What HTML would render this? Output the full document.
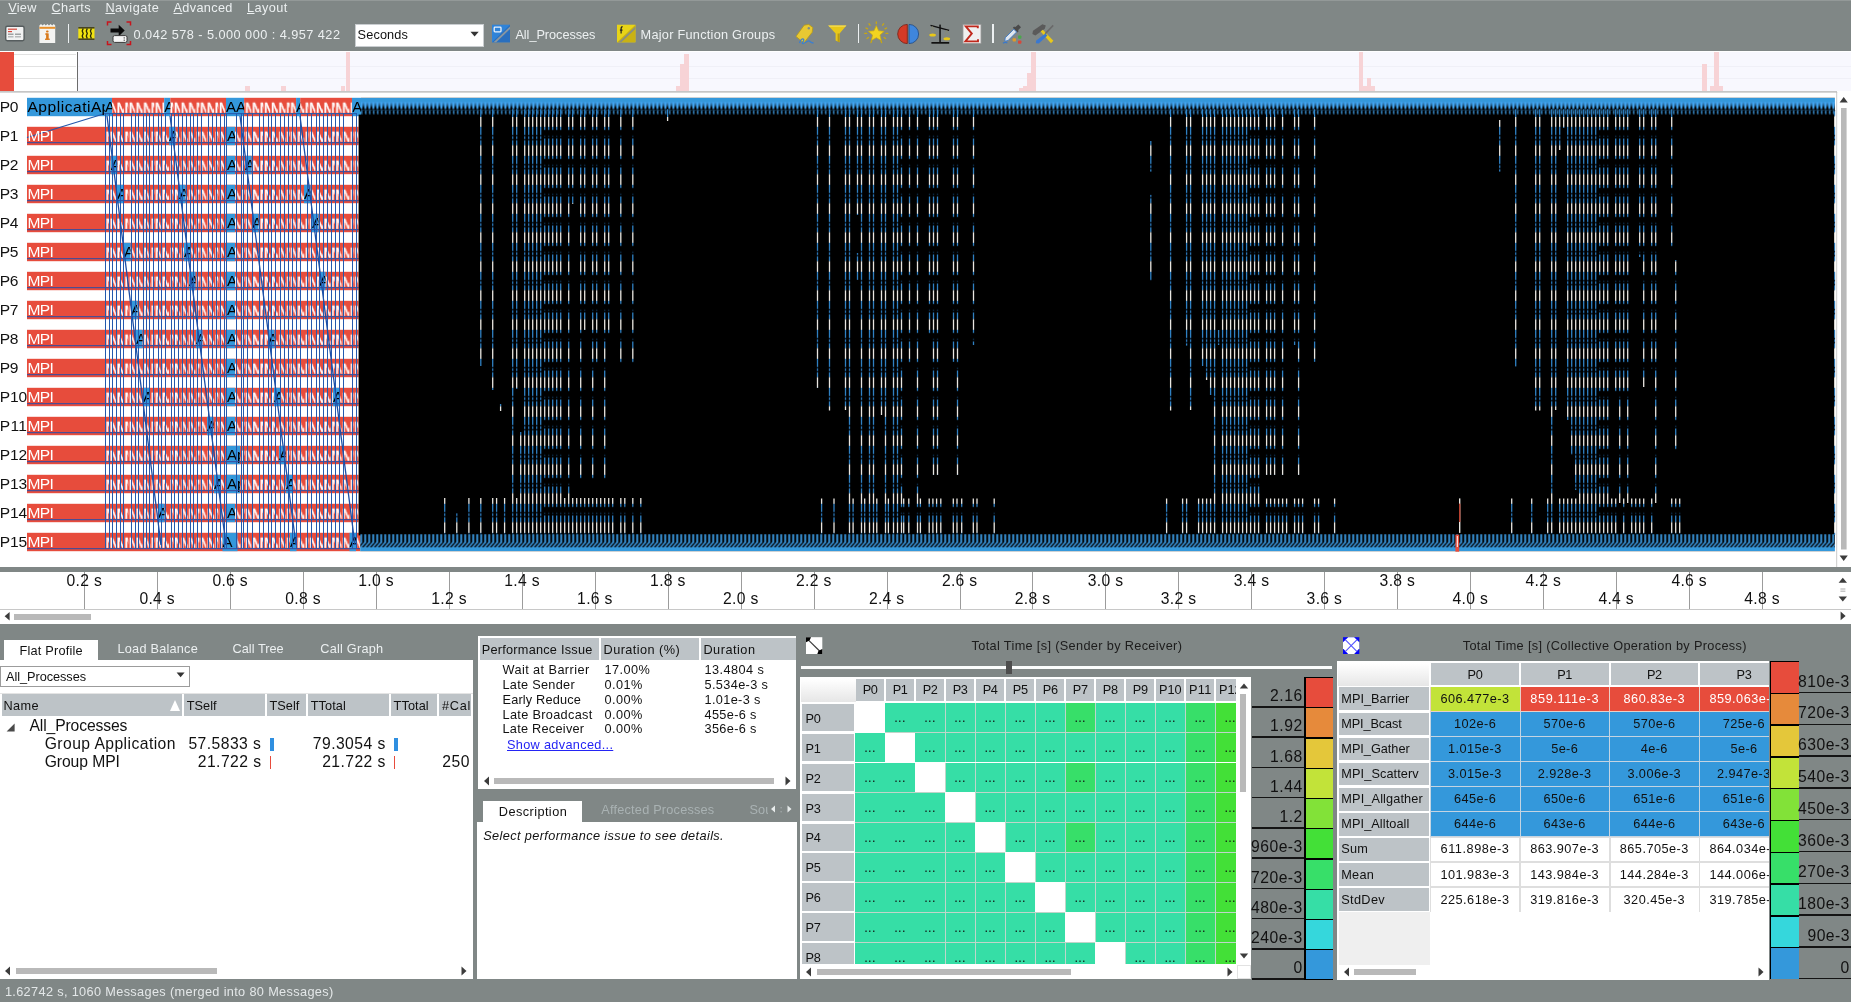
<!DOCTYPE html><html><head><meta charset="utf-8"><title>Trace Analyzer</title><style>
html,body{margin:0;padding:0;background:#fff}
body{width:1852px;height:1002px;position:relative;overflow:hidden;font-family:"Liberation Sans",sans-serif}
body div,body span,body svg{position:absolute;display:block}
span{white-space:pre}
u{text-decoration:underline}
</style></head><body><div style="left:0;top:0;width:1852px;height:1002px;will-change:transform">
<div style="left:0.0px;top:0.0px;width:1851.0px;height:51.3px;background:#808786;"></div>
<div style="left:0.0px;top:0.0px;width:1851.0px;height:1.2px;background:#939998;"></div>
<span style="left:8.2px;top:-0.2px;font-size:12.72px;line-height:15.26px;letter-spacing:0.284px;color:#ecf0f1;"><u>V</u>iew</span>
<span style="left:51.6px;top:-0.2px;font-size:12.72px;line-height:15.26px;letter-spacing:0.294px;color:#ecf0f1;"><u>C</u>harts</span>
<span style="left:105.4px;top:-0.2px;font-size:12.72px;line-height:15.26px;letter-spacing:0.453px;color:#ecf0f1;"><u>N</u>avigate</span>
<span style="left:173.5px;top:-0.2px;font-size:12.72px;line-height:15.26px;letter-spacing:0.338px;color:#ecf0f1;"><u>A</u>dvanced</span>
<span style="left:247.0px;top:-0.2px;font-size:12.72px;line-height:15.26px;letter-spacing:0.434px;color:#ecf0f1;"><u>L</u>ayout</span>

<svg style="left:0;top:18px" width="1100" height="32" viewBox="0 18 1100 32">
<!-- icon1 doc -->
<rect x="5.700" y="26.300" width="18.400" height="14.400" rx="1.600" fill="#f1f2f2" stroke="#565d5e" stroke-width="1.400"/>
<rect x="8" y="28.6" width="9" height="1.2" fill="#d8473a"/><rect x="8" y="31" width="4" height="1.2" fill="#d8473a"/>
<rect x="8" y="33.6" width="5.5" height="1.2" fill="#8a8f90"/><rect x="15" y="33.6" width="6" height="1.2" fill="#8a8f90"/>
<rect x="8" y="36.2" width="5.5" height="1.2" fill="#a8acad"/><rect x="15" y="36.2" width="6" height="1.2" fill="#a8acad"/>
<!-- icon2 calendar i -->
<path d="M39.4 25.4l1.6-1.4 1.6 1.4 1.6-1.4 1.6 1.4 1.6-1.4 1.6 1.4 1.6-1.4 1.6 1.4 1.6-1.4 1.4 1.4V43H39.4z" fill="#f4f4f2"/>
<rect x="39.4" y="26.8" width="15.8" height="2" fill="#e8902a"/>
<rect x="46.1" y="33.4" width="2.6" height="6" fill="#d9791a"/><rect x="45.2" y="33.4" width="2.4" height="1.3" fill="#d9791a"/><rect x="45" y="38.6" width="4.8" height="1.3" fill="#d9791a"/><rect x="46" y="30.4" width="2.6" height="2.1" rx="1" fill="#d9791a"/>
<!-- icon3 film -->
<rect x="78.3" y="27.2" width="16.2" height="12.6" fill="#f2e310"/>
<rect x="78.3" y="27.2" width="16.2" height="1.3" fill="#222"/><rect x="78.3" y="38.5" width="16.2" height="1.3" fill="#222"/>
<path d="M83.200 28.500l-1 2.500 1 2.500-1 2.500 1 2.500M87.300 28.500l-1 2.500 1 2.500-1 2.500 1 2.500M91.400 28.500l-1 2.500 1 2.500-1 2.500 1 2.500" stroke="#2a2a08" stroke-width="1.300" fill="none"/>
<!-- icon4 zoom arrow -->
<path d="M107.5 25.5v-3.4h4M126.5 22.1h4v3.4M107.5 41v3.6h4M126.5 44.6h4V41" fill="none" stroke="#c8141c" stroke-width="1.5"/>
<path d="M110.5 28.6h8.2v-3.9l6 5.8-6 5.8v-3.9h-8.2z" fill="#0a0a0a"/>
<rect x="113" y="35.6" width="14" height="6.8" rx="1.6" fill="#f6f6f6" stroke="#3a3a3a" stroke-width="1"/>
<rect x="123.6" y="37.3" width="1.3" height="1.2" fill="#555"/><rect x="123.6" y="39.6" width="1.3" height="1.2" fill="#555"/>
<!-- icon5 blue square -->
<rect x="492" y="24.7" width="18" height="17.6" fill="#2f83d8"/>
<path d="M510 24.7v17.6h-18z" fill="#2a6fbe"/>
<path d="M493.5 42.3l16.5-15.8v2.6l-13.8 13.2z" fill="#8a97a0"/>
<rect x="494.2" y="27.2" width="6.8" height="4.6" rx="0.8" fill="none" stroke="#eaf2fb" stroke-width="1.3"/>
<!-- icon6 yellow square -->
<rect x="617" y="24.7" width="18.4" height="17.6" fill="#e8d418"/>
<path d="M635.4 24.7v17.6h-18.4z" fill="#c9b214"/>
<path d="M618.5 42.3l16.9-15.8v2.6l-14.1 13.2z" fill="#8a8f80"/>
<path d="M622.6 26.6c-1.3 0-1.5 1-1.5 2.2v4.6M619.9 30.2h2.6" fill="none" stroke="#222" stroke-width="1.2"/>
<!-- tag -->
<path d="M796 36.4l8.2-11.2 4.6-.8 4 3.2-.6 4.6-8.4 10.8z" fill="#e8c832" stroke="#b89a14" stroke-width=".8"/>
<circle cx="808.8" cy="28.2" r="1.2" fill="#7f8c8d"/>
<path d="M799.5 43c1-3 3-5.4 4.2-3.6 1 1.6-2.6 3.6-1 4.2 1.6.5 5-3.6 6.6-2.6 1.3.8 1.2 2 4.2 2" fill="none" stroke="#3b7fd0" stroke-width="1.3"/>
<!-- funnel -->
<path d="M828.2 25.4h18.2l-6.8 8v8.8l-4 -1.6v-7.2z" fill="#e8c81a"/>
<path d="M839.6 33.4v8.8l-2-.8v-8z" fill="#b89a14"/><path d="M828.2 25.4h18.2l-1.2 1.4h-15.8z" fill="#f4de58"/>
<!-- star -->
<path d="M876.3 25.6l2.3 5.2 5.6.5-4.2 3.8 1.3 5.5-5-2.9-5 2.9 1.3-5.500-4.2-3.8 5.6-.5z" fill="#f2d420" stroke="#c9a810" stroke-width=".7"/>
<path d="M876.3 21.800v1.800M866 28l1.600.8M886.600 28l-1.600.8M867 38.500l1.500-1M885.600 38.500l-1.500-1M871 42.600l.6-1.500M881.600 42.600l-.6-1.500M869 23.800l1 1.400M883.600 23.800l-1 1.400M864.800 33.400h1.800M886 33.400h1.800" stroke="#c9a810" stroke-width="1.300" stroke-linecap="round"/>
<!-- red/blue ball -->
<path d="M907.300 24.400a9.600 9.600 0 0 0 0 19.200z" fill="#d43a26" stroke="#7a1d12" stroke-width=".8"/>
<path d="M909 24.400a9.600 9.600 0 0 1 0 19.200z" fill="#3f86dc" stroke="#1d4a86" stroke-width=".8"/>
<!-- scales -->
<path d="M930.500 25.400l18.600 5" stroke="#111" stroke-width="1.500"/><rect x="939.300" y="24.600" width="1.500" height="18" fill="#111"/><rect x="931.400" y="42" width="17.800" height="1.700" fill="#111"/>
<path d="M932.600 26.400l-3 8h6zM946.800 30.200l-3 8h6z" fill="none" stroke="#8c8c6c" stroke-width=".6"/>
<ellipse cx="932.600" cy="35" rx="3.300" ry="1.500" fill="#e8c81a"/><ellipse cx="946.800" cy="38.800" rx="3.300" ry="1.500" fill="#e8c81a"/>
<!-- sigma -->
<rect x="963" y="24.400" width="18" height="19" fill="#f0f0f0" stroke="#9a9a9a" stroke-width=".8"/>
<path d="M977.800 28.200v-1.800h-12l6 7.200-6.400 7.800h12.600v-2.200" fill="none" stroke="#c0281c" stroke-width="1.900"/>
<!-- dropper -->
<path d="M1018.400 24.600l2.600 2.600-3 3 .8.800-1.400 1.400-4.600-4.600 1.400-1.400.8.800z" fill="#4a4a4a"/>
<path d="M1013.800 29.200l2.800 2.800-8.600 8.600-3.200.6.400-3.400z" fill="#dfe6ee" stroke="#3a78c8" stroke-width=".9"/>
<path d="M1003 43.200c1.600-1.200 3-1 4.400-.2" stroke="#3a78c8" stroke-width="1.300" fill="none"/>
<rect x="1018" y="35.400" width="3.400" height="3.400" rx=".8" fill="#4aa84a"/><rect x="1012.600" y="38.200" width="3.400" height="3.400" rx=".8" fill="#e09a2a"/><rect x="1018" y="40.400" width="3.400" height="3.400" rx=".8" fill="#d8473a"/>
<!-- tools -->
<path d="M1033 30.800l9.400-6.600 3.400 1.200-1 3.400-9.400 6.600-3-1.400z" fill="#5a5a5a"/>
<path d="M1040.600 31.400l2.200-1.600 10.600 11-2.400 2.400z" fill="#e8c81a"/>
<path d="M1053.200 25.400l-8 8.400" stroke="#6a6a6a" stroke-width="1.600"/>
<path d="M1045.400 33.600l2 2-8.600 8-3-.4.400-2.600z" fill="#3a78d0"/>
</svg>
<div style="left:67.6px;top:24.3px;width:1.5px;height:19.0px;background:#ecf0f1;"></div>
<div style="left:857.5px;top:24.3px;width:1.5px;height:19.0px;background:#ecf0f1;"></div>
<div style="left:992.3px;top:24.3px;width:1.5px;height:19.0px;background:#ecf0f1;"></div>
<span style="left:133.6px;top:27.0px;font-size:12.72px;line-height:15.26px;letter-spacing:0.460px;color:#ecf0f1;">0.042 578 - 5.000 000 : 4.957 422</span>
<div style="left:355.0px;top:23.6px;width:128.5px;height:23.0px;background:#fff;box-sizing:border-box;border:1px solid #c9cdd0;"></div>
<span style="left:357.6px;top:27.2px;font-size:12.72px;line-height:15.26px;letter-spacing:0.131px;color:#111;">Seconds</span>
<svg style="left:470px;top:31px" width="10" height="7"><path d="M0.5 0.7h8.2L4.6 5.6z" fill="#333"/></svg>
<span style="left:515.4px;top:26.8px;font-size:12.72px;line-height:15.26px;letter-spacing:-0.043px;color:#ecf0f1;">All_Processes</span>
<span style="left:640.6px;top:26.8px;font-size:12.72px;line-height:15.26px;letter-spacing:0.257px;color:#ecf0f1;">Major Function Groups</span>
<div style="left:0.0px;top:51.3px;width:1851.0px;height:41.0px;background:#fff;"></div>
<div style="left:78.0px;top:52.4px;width:1772.5px;height:39.0px;background:#f8f8fe;"></div>
<div style="left:78.0px;top:65.6px;width:1772.5px;height:1.0px;background:#f0f0f7;"></div>
<div style="left:78.0px;top:78.2px;width:1772.5px;height:1.0px;background:#f0f0f7;"></div>
<div style="left:0.0px;top:51.8px;width:14.2px;height:39.6px;background:#e74c3c;"></div>
<div style="left:14.2px;top:54.0px;width:61.6px;height:1.3px;background:#e2e2e2;"></div>
<div style="left:14.2px;top:66.0px;width:61.6px;height:1.3px;background:#e2e2e2;"></div>
<div style="left:14.2px;top:78.0px;width:61.6px;height:1.3px;background:#e2e2e2;"></div>
<div style="left:76.5px;top:52.0px;width:1.4px;height:39.6px;background:#6c6c6c;"></div>
<div style="left:245.4px;top:85.8px;width:4.8px;height:5.6px;background:#f7d3d6;"></div>
<div style="left:281.3px;top:85.8px;width:4.9px;height:5.6px;background:#f7d3d6;"></div>
<div style="left:341.2px;top:85.8px;width:4.3px;height:5.6px;background:#f7d3d6;"></div>
<div style="left:345.5px;top:52.4px;width:4.6px;height:39.0px;background:#f7d3d6;"></div>
<div style="left:676.0px;top:86.0px;width:4.3px;height:5.4px;background:#f7d3d6;"></div>
<div style="left:680.3px;top:63.7px;width:4.1px;height:27.7px;background:#f7d3d6;"></div>
<div style="left:684.4px;top:54.0px;width:4.6px;height:37.4px;background:#f7d3d6;"></div>
<div style="left:1019.0px;top:88.0px;width:4.3px;height:3.4px;background:#f7d3d6;"></div>
<div style="left:1023.3px;top:85.8px;width:4.1px;height:5.6px;background:#f7d3d6;"></div>
<div style="left:1027.4px;top:72.8px;width:3.9px;height:18.6px;background:#f7d3d6;"></div>
<div style="left:1031.3px;top:52.4px;width:4.7px;height:39.0px;background:#f7d3d6;"></div>
<div style="left:1358.5px;top:52.4px;width:4.5px;height:39.0px;background:#f7d3d6;"></div>
<div style="left:1363.0px;top:86.0px;width:3.5px;height:5.4px;background:#f7d3d6;"></div>
<div style="left:1366.5px;top:77.8px;width:4.5px;height:13.6px;background:#f7d3d6;"></div>
<div style="left:1371.0px;top:86.0px;width:4.0px;height:5.4px;background:#f7d3d6;"></div>
<div style="left:1702.1px;top:63.8px;width:4.9px;height:27.6px;background:#f7d3d6;"></div>
<div style="left:1710.2px;top:85.6px;width:12.7px;height:5.8px;background:#f7d3d6;"></div>
<div style="left:1714.1px;top:52.4px;width:4.8px;height:39.0px;background:#f7d3d6;"></div>
<div style="left:0.0px;top:91.3px;width:1837.0px;height:1.4px;background:#c6c6c6;"></div>
<svg style="left:0;top:92px" width="1852" height="476" viewBox="0 92 1852 476"><defs><pattern id="pm" patternUnits="userSpaceOnUse" x="105.300" y="97.8" width="45.100" height="29.0"><svg x="0" y="0" width="3.9" height="29.0" overflow="hidden"><text x="0.200" y="14.700" font-family="Liberation Sans" font-size="15.200" fill="#fff" stroke="#fff" stroke-width=".350">M</text></svg><svg x="4.2" y="0" width="6.5" height="29.0" overflow="hidden"><text x="0.200" y="14.700" font-family="Liberation Sans" font-size="15.200" fill="#fff" stroke="#fff" stroke-width=".350">M</text></svg><svg x="11.0" y="0" width="7.6" height="29.0" overflow="hidden"><text x="0.200" y="14.700" font-family="Liberation Sans" font-size="15.200" fill="#fff" stroke="#fff" stroke-width=".350">M</text></svg><svg x="18.9" y="0" width="3.9" height="29.0" overflow="hidden"><text x="0.200" y="14.700" font-family="Liberation Sans" font-size="15.200" fill="#fff" stroke="#fff" stroke-width=".350">M</text></svg><svg x="23.1" y="0" width="6.5" height="29.0" overflow="hidden"><text x="0.200" y="14.700" font-family="Liberation Sans" font-size="15.200" fill="#fff" stroke="#fff" stroke-width=".350">M</text></svg><svg x="29.9" y="0" width="7.3" height="29.0" overflow="hidden"><text x="0.200" y="14.700" font-family="Liberation Sans" font-size="15.200" fill="#fff" stroke="#fff" stroke-width=".350">M</text></svg><svg x="37.5" y="0" width="7.3" height="29.0" overflow="hidden"><text x="0.200" y="14.700" font-family="Liberation Sans" font-size="15.200" fill="#fff" stroke="#fff" stroke-width=".350">M</text></svg></pattern><pattern id="vs" patternUnits="userSpaceOnUse" x="0" y="97.8" width="1900" height="29.0"><rect y="0" width="1900" height="8.2" fill="#2f80c2"/><rect y="8.2" width="1900" height="1.3" fill="#061a2c"/><rect y="9.5" width="1900" height="2.7" fill="#2a74b4"/><rect y="12.2" width="1900" height="1.3" fill="#061a2c"/><rect y="13.5" width="1900" height="4.9" fill="#2f80c2"/><rect y="18.4" width="1900" height="10.6" fill="#e9e6e1"/></pattern><pattern id="vs2" patternUnits="userSpaceOnUse" x="0" y="97.8" width="1900" height="29.0"><rect y="0" width="1900" height="3.4" fill="#2f80c2"/><rect y="3.4" width="1900" height="5.4" fill="#000"/><rect y="8.8" width="1900" height="1.2" fill="#0d3050"/><rect y="10" width="1900" height="1.6" fill="#000"/><rect y="11.6" width="1900" height="6.8" fill="#2f80c2"/><rect y="18.4" width="1900" height="10.6" fill="#e9e6e1"/></pattern><pattern id="t0" patternUnits="userSpaceOnUse" x="361.410" y="97.8" width="4" height="40"><rect width="4" height="40" fill="#000"/><rect width="4" height="12.400" fill="#41a4f0"/><rect width="4" height="4.300" fill="#3498db"/><path d="M-.1 12.400L.5 11.300 1.050 9.800 1.550 7.400 2 4 2.450 7.400 2.950 9.800 3.500 11.300 4.100 12.400z" fill="#000"/><ellipse cx="0.350" cy="14.500" rx=".620" ry="2.200" fill="#41a4f0"/><ellipse cx="4.350" cy="14.500" rx=".620" ry="2.200" fill="#41a4f0"/></pattern><pattern id="t15" patternUnits="userSpaceOnUse" x="359.430" y="532.8" width="4" height="18.4"><rect width="4" height="18.4" fill="#000"/><rect x=".9" y="1.300" width="1.750" height="8.800" fill="#3fa2ee"/><path d="M.9 9.500h1.900L-2.200 14.900h-1.900zM4.900 9.500h1.900L1.800 14.900h-1.900z" fill="#3fa2ee"/><rect y="14.500" width="4" height="4" fill="#3498db"/></pattern></defs><rect x="0" y="92.700" width="1836.300" height="474.600" fill="#fff"/><rect x="1836.300" y="92" width="1.100" height="475.300" fill="#c2c2c2"/><rect x="1837.400" y="92.500" width="13.600" height="474.800" fill="#fff"/><path d="M1839.600 102.600h8.200l-4.100-5.600zM1839.600 555.500h8.200l-4.100 5.600z" fill="#3c3c3c"/><rect x="1841" y="108" width="5.600" height="441.500" fill="#b9b9b9"/><rect x="27" y="97.8" width="85.0" height="18.4" fill="#3498db"/><rect x="112" y="97.8" width="52.2" height="18.4" fill="#e74c3c"/><rect x="112" y="97.8" width="52.2" height="18.4" fill="url(#pm)"/><rect x="164.2" y="97.8" width="6.1" height="18.4" fill="#3498db"/><rect x="170.3" y="97.8" width="55.7" height="18.4" fill="#e74c3c"/><rect x="170.3" y="97.8" width="55.7" height="18.4" fill="url(#pm)"/><rect x="226" y="97.8" width="18.1" height="18.4" fill="#3498db"/><rect x="244.1" y="97.8" width="52.0" height="18.4" fill="#e74c3c"/><rect x="244.1" y="97.8" width="52.0" height="18.4" fill="url(#pm)"/><rect x="296.1" y="97.8" width="4.1" height="18.4" fill="#3498db"/><rect x="300.2" y="97.8" width="51.8" height="18.4" fill="#e74c3c"/><rect x="300.2" y="97.8" width="51.8" height="18.4" fill="url(#pm)"/><rect x="352" y="97.8" width="9.0" height="18.4" fill="#3498db"/><rect x="27" y="126.8" width="331.6" height="18.4" fill="#e74c3c"/><rect x="105.300" y="126.8" width="253.3" height="18.4" fill="url(#pm)"/><rect x="27" y="155.8" width="331.6" height="18.4" fill="#e74c3c"/><rect x="105.300" y="155.8" width="253.3" height="18.4" fill="url(#pm)"/><rect x="27" y="184.8" width="331.6" height="18.4" fill="#e74c3c"/><rect x="105.300" y="184.8" width="253.3" height="18.4" fill="url(#pm)"/><rect x="27" y="213.8" width="331.6" height="18.4" fill="#e74c3c"/><rect x="105.300" y="213.8" width="253.3" height="18.4" fill="url(#pm)"/><rect x="27" y="242.8" width="331.6" height="18.4" fill="#e74c3c"/><rect x="105.300" y="242.8" width="253.3" height="18.4" fill="url(#pm)"/><rect x="27" y="271.8" width="331.6" height="18.4" fill="#e74c3c"/><rect x="105.300" y="271.8" width="253.3" height="18.4" fill="url(#pm)"/><rect x="27" y="300.8" width="331.6" height="18.4" fill="#e74c3c"/><rect x="105.300" y="300.8" width="253.3" height="18.4" fill="url(#pm)"/><rect x="27" y="329.8" width="331.6" height="18.4" fill="#e74c3c"/><rect x="105.300" y="329.8" width="253.3" height="18.4" fill="url(#pm)"/><rect x="27" y="358.8" width="331.6" height="18.4" fill="#e74c3c"/><rect x="105.300" y="358.8" width="253.3" height="18.4" fill="url(#pm)"/><rect x="27" y="387.8" width="331.6" height="18.4" fill="#e74c3c"/><rect x="105.300" y="387.8" width="253.3" height="18.4" fill="url(#pm)"/><rect x="27" y="416.8" width="331.6" height="18.4" fill="#e74c3c"/><rect x="105.300" y="416.8" width="253.3" height="18.4" fill="url(#pm)"/><rect x="27" y="445.8" width="331.6" height="18.4" fill="#e74c3c"/><rect x="105.300" y="445.8" width="253.3" height="18.4" fill="url(#pm)"/><rect x="27" y="474.8" width="331.6" height="18.4" fill="#e74c3c"/><rect x="105.300" y="474.8" width="253.3" height="18.4" fill="url(#pm)"/><rect x="27" y="503.8" width="331.6" height="18.4" fill="#e74c3c"/><rect x="105.300" y="503.8" width="253.3" height="18.4" fill="url(#pm)"/><rect x="27" y="532.8" width="333.2" height="18.4" fill="#e74c3c"/><rect x="105.300" y="532.8" width="254.9" height="18.4" fill="url(#pm)"/><rect x="227.0" y="126.8" width="8.0" height="18.4" fill="#3498db"/><svg x="227.0" y="126.8" width="8.0" height="18.4" overflow="hidden"><text x="0" y="14.700" font-family="Liberation Sans" font-size="15" fill="#000">A</text></svg><rect x="227.0" y="155.8" width="8.0" height="18.4" fill="#3498db"/><svg x="227.0" y="155.8" width="8.0" height="18.4" overflow="hidden"><text x="0" y="14.700" font-family="Liberation Sans" font-size="15" fill="#000">A</text></svg><rect x="227.0" y="184.8" width="8.0" height="18.4" fill="#3498db"/><svg x="227.0" y="184.8" width="8.0" height="18.4" overflow="hidden"><text x="0" y="14.700" font-family="Liberation Sans" font-size="15" fill="#000">A</text></svg><rect x="227.0" y="213.8" width="8.0" height="18.4" fill="#3498db"/><svg x="227.0" y="213.8" width="8.0" height="18.4" overflow="hidden"><text x="0" y="14.700" font-family="Liberation Sans" font-size="15" fill="#000">A</text></svg><rect x="227.0" y="242.8" width="8.0" height="18.4" fill="#3498db"/><svg x="227.0" y="242.8" width="8.0" height="18.4" overflow="hidden"><text x="0" y="14.700" font-family="Liberation Sans" font-size="15" fill="#000">A</text></svg><rect x="227.0" y="271.8" width="8.0" height="18.4" fill="#3498db"/><svg x="227.0" y="271.8" width="8.0" height="18.4" overflow="hidden"><text x="0" y="14.700" font-family="Liberation Sans" font-size="15" fill="#000">A</text></svg><rect x="227.0" y="300.8" width="8.0" height="18.4" fill="#3498db"/><svg x="227.0" y="300.8" width="8.0" height="18.4" overflow="hidden"><text x="0" y="14.700" font-family="Liberation Sans" font-size="15" fill="#000">A</text></svg><rect x="227.0" y="329.8" width="8.0" height="18.4" fill="#3498db"/><svg x="227.0" y="329.8" width="8.0" height="18.4" overflow="hidden"><text x="0" y="14.700" font-family="Liberation Sans" font-size="15" fill="#000">A</text></svg><rect x="227.0" y="358.8" width="8.0" height="18.4" fill="#3498db"/><svg x="227.0" y="358.8" width="8.0" height="18.4" overflow="hidden"><text x="0" y="14.700" font-family="Liberation Sans" font-size="15" fill="#000">A</text></svg><rect x="227.0" y="387.8" width="8.0" height="18.4" fill="#3498db"/><svg x="227.0" y="387.8" width="8.0" height="18.4" overflow="hidden"><text x="0" y="14.700" font-family="Liberation Sans" font-size="15" fill="#000">A</text></svg><rect x="227.0" y="416.8" width="8.0" height="18.4" fill="#3498db"/><svg x="227.0" y="416.8" width="8.0" height="18.4" overflow="hidden"><text x="0" y="14.700" font-family="Liberation Sans" font-size="15" fill="#000">A</text></svg><rect x="227.0" y="445.8" width="13.0" height="18.4" fill="#3498db"/><svg x="227.0" y="445.8" width="13.0" height="18.4" overflow="hidden"><text x="0" y="14.700" font-family="Liberation Sans" font-size="15" fill="#000">Ap</text></svg><rect x="227.0" y="474.8" width="13.0" height="18.4" fill="#3498db"/><svg x="227.0" y="474.8" width="13.0" height="18.4" overflow="hidden"><text x="0" y="14.700" font-family="Liberation Sans" font-size="15" fill="#000">Ap</text></svg><rect x="227.0" y="503.8" width="8.0" height="18.4" fill="#3498db"/><svg x="227.0" y="503.8" width="8.0" height="18.4" overflow="hidden"><text x="0" y="14.700" font-family="Liberation Sans" font-size="15" fill="#000">A</text></svg><rect x="222.5" y="532.8" width="15.0" height="18.4" fill="#3498db"/><svg x="222.5" y="532.8" width="15.0" height="18.4" overflow="hidden"><text x="0" y="14.700" font-family="Liberation Sans" font-size="15" fill="#000">A</text></svg><rect x="169.0" y="126.8" width="6.5" height="18.4" fill="#3498db"/><svg x="169.0" y="126.8" width="6.5" height="18.4" overflow="hidden"><text x="0" y="14.700" font-family="Liberation Sans" font-size="15" fill="#000">A</text></svg><rect x="110.7" y="155.8" width="6.5" height="18.4" fill="#3498db"/><svg x="110.7" y="155.8" width="6.5" height="18.4" overflow="hidden"><text x="0" y="14.700" font-family="Liberation Sans" font-size="15" fill="#000">A</text></svg><rect x="245.0" y="155.8" width="6.5" height="18.4" fill="#3498db"/><svg x="245.0" y="155.8" width="6.5" height="18.4" overflow="hidden"><text x="0" y="14.700" font-family="Liberation Sans" font-size="15" fill="#000">A</text></svg><rect x="117.0" y="184.8" width="6.5" height="18.4" fill="#3498db"/><svg x="117.0" y="184.8" width="6.5" height="18.4" overflow="hidden"><text x="0" y="14.700" font-family="Liberation Sans" font-size="15" fill="#000">A</text></svg><rect x="179.0" y="184.8" width="6.5" height="18.4" fill="#3498db"/><svg x="179.0" y="184.8" width="6.5" height="18.4" overflow="hidden"><text x="0" y="14.700" font-family="Liberation Sans" font-size="15" fill="#000">A</text></svg><rect x="304.0" y="184.8" width="6.5" height="18.4" fill="#3498db"/><svg x="304.0" y="184.8" width="6.5" height="18.4" overflow="hidden"><text x="0" y="14.700" font-family="Liberation Sans" font-size="15" fill="#000">A</text></svg><rect x="252.0" y="213.8" width="6.5" height="18.4" fill="#3498db"/><svg x="252.0" y="213.8" width="6.5" height="18.4" overflow="hidden"><text x="0" y="14.700" font-family="Liberation Sans" font-size="15" fill="#000">A</text></svg><rect x="312.0" y="213.8" width="6.5" height="18.4" fill="#3498db"/><svg x="312.0" y="213.8" width="6.5" height="18.4" overflow="hidden"><text x="0" y="14.700" font-family="Liberation Sans" font-size="15" fill="#000">A</text></svg><rect x="124.0" y="242.8" width="6.5" height="18.4" fill="#3498db"/><svg x="124.0" y="242.8" width="6.5" height="18.4" overflow="hidden"><text x="0" y="14.700" font-family="Liberation Sans" font-size="15" fill="#000">A</text></svg><rect x="184.0" y="242.8" width="6.5" height="18.4" fill="#3498db"/><svg x="184.0" y="242.8" width="6.5" height="18.4" overflow="hidden"><text x="0" y="14.700" font-family="Liberation Sans" font-size="15" fill="#000">A</text></svg><rect x="189.0" y="271.8" width="6.5" height="18.4" fill="#3498db"/><svg x="189.0" y="271.8" width="6.5" height="18.4" overflow="hidden"><text x="0" y="14.700" font-family="Liberation Sans" font-size="15" fill="#000">A</text></svg><rect x="319.0" y="271.8" width="6.5" height="18.4" fill="#3498db"/><svg x="319.0" y="271.8" width="6.5" height="18.4" overflow="hidden"><text x="0" y="14.700" font-family="Liberation Sans" font-size="15" fill="#000">A</text></svg><rect x="131.0" y="300.8" width="6.5" height="18.4" fill="#3498db"/><svg x="131.0" y="300.8" width="6.5" height="18.4" overflow="hidden"><text x="0" y="14.700" font-family="Liberation Sans" font-size="15" fill="#000">A</text></svg><rect x="136.0" y="329.8" width="6.5" height="18.4" fill="#3498db"/><svg x="136.0" y="329.8" width="6.5" height="18.4" overflow="hidden"><text x="0" y="14.700" font-family="Liberation Sans" font-size="15" fill="#000">A</text></svg><rect x="196.0" y="329.8" width="6.5" height="18.4" fill="#3498db"/><svg x="196.0" y="329.8" width="6.5" height="18.4" overflow="hidden"><text x="0" y="14.700" font-family="Liberation Sans" font-size="15" fill="#000">A</text></svg><rect x="268.0" y="329.8" width="6.5" height="18.4" fill="#3498db"/><svg x="268.0" y="329.8" width="6.5" height="18.4" overflow="hidden"><text x="0" y="14.700" font-family="Liberation Sans" font-size="15" fill="#000">A</text></svg><rect x="143.0" y="387.8" width="6.5" height="18.4" fill="#3498db"/><svg x="143.0" y="387.8" width="6.5" height="18.4" overflow="hidden"><text x="0" y="14.700" font-family="Liberation Sans" font-size="15" fill="#000">A</text></svg><rect x="274.0" y="387.8" width="6.5" height="18.4" fill="#3498db"/><svg x="274.0" y="387.8" width="6.5" height="18.4" overflow="hidden"><text x="0" y="14.700" font-family="Liberation Sans" font-size="15" fill="#000">A</text></svg><rect x="333.0" y="387.8" width="6.5" height="18.4" fill="#3498db"/><svg x="333.0" y="387.8" width="6.5" height="18.4" overflow="hidden"><text x="0" y="14.700" font-family="Liberation Sans" font-size="15" fill="#000">A</text></svg><rect x="207.0" y="416.8" width="6.5" height="18.4" fill="#3498db"/><svg x="207.0" y="416.8" width="6.5" height="18.4" overflow="hidden"><text x="0" y="14.700" font-family="Liberation Sans" font-size="15" fill="#000">A</text></svg><rect x="279.0" y="445.8" width="6.5" height="18.4" fill="#3498db"/><svg x="279.0" y="445.8" width="6.5" height="18.4" overflow="hidden"><text x="0" y="14.700" font-family="Liberation Sans" font-size="15" fill="#000">A</text></svg><rect x="214.0" y="474.8" width="6.5" height="18.4" fill="#3498db"/><svg x="214.0" y="474.8" width="6.5" height="18.4" overflow="hidden"><text x="0" y="14.700" font-family="Liberation Sans" font-size="15" fill="#000">A</text></svg><rect x="286.0" y="474.8" width="6.5" height="18.4" fill="#3498db"/><svg x="286.0" y="474.8" width="6.5" height="18.4" overflow="hidden"><text x="0" y="14.700" font-family="Liberation Sans" font-size="15" fill="#000">A</text></svg><rect x="158.0" y="503.8" width="6.5" height="18.4" fill="#3498db"/><svg x="158.0" y="503.8" width="6.5" height="18.4" overflow="hidden"><text x="0" y="14.700" font-family="Liberation Sans" font-size="15" fill="#000">A</text></svg><rect x="290.0" y="532.8" width="6.5" height="18.4" fill="#3498db"/><svg x="290.0" y="532.8" width="6.5" height="18.4" overflow="hidden"><text x="0" y="14.700" font-family="Liberation Sans" font-size="15" fill="#000">A</text></svg><rect x="349.5" y="532.8" width="6.5" height="18.4" fill="#3498db"/><svg x="349.5" y="532.8" width="6.5" height="18.4" overflow="hidden"><text x="0" y="14.700" font-family="Liberation Sans" font-size="15" fill="#000">A</text></svg><svg x="105.0" y="97.8" width="7.3" height="18.4" overflow="hidden"><text x="0" y="14.700" font-family="Liberation Sans" font-size="15" fill="#000">A</text></svg><svg x="164.2" y="97.8" width="6.1" height="18.4" overflow="hidden"><text x="0" y="14.700" font-family="Liberation Sans" font-size="15" fill="#000">A</text></svg><svg x="226.0" y="97.8" width="18.1" height="18.4" overflow="hidden"><text x="0" y="14.700" font-family="Liberation Sans" font-size="15" fill="#000">AA</text></svg><svg x="296.1" y="97.8" width="4.1" height="18.4" overflow="hidden"><text x="0" y="14.700" font-family="Liberation Sans" font-size="15" fill="#000">A</text></svg><svg x="352.3" y="97.8" width="9.7" height="18.4" overflow="hidden"><text x="0" y="14.700" font-family="Liberation Sans" font-size="15" fill="#000">A</text></svg><rect x="105" y="113.1" width="252" height="1.100" fill="#2459ad"/><rect x="27" y="142.1" width="331.6" height="1.100" fill="#3b4d9c"/><rect x="27" y="171.1" width="331.6" height="1.100" fill="#3b4d9c"/><rect x="27" y="200.1" width="331.6" height="1.100" fill="#3b4d9c"/><rect x="27" y="229.1" width="331.6" height="1.100" fill="#3b4d9c"/><rect x="27" y="258.1" width="331.6" height="1.100" fill="#3b4d9c"/><rect x="27" y="287.1" width="331.6" height="1.100" fill="#3b4d9c"/><rect x="27" y="316.1" width="331.6" height="1.100" fill="#3b4d9c"/><rect x="27" y="345.1" width="331.6" height="1.100" fill="#3b4d9c"/><rect x="27" y="374.1" width="331.6" height="1.100" fill="#3b4d9c"/><rect x="27" y="403.1" width="331.6" height="1.100" fill="#3b4d9c"/><rect x="27" y="432.1" width="331.6" height="1.100" fill="#3b4d9c"/><rect x="27" y="461.1" width="331.6" height="1.100" fill="#3b4d9c"/><rect x="27" y="490.1" width="331.6" height="1.100" fill="#3b4d9c"/><rect x="27" y="519.1" width="331.6" height="1.100" fill="#3b4d9c"/><rect x="27" y="548.1" width="333" height="1.100" fill="#3b4d9c"/><path d="M105.5 113.500V549M109.5 113.500V549M112.5 113.500V549M116.5 113.500V549M120.5 113.500V549M123.5 113.500V549M131.5 113.500V549M135.5 113.500V549M138.5 113.500V549M143.5 113.500V549M146.5 113.500V549M149.5 113.500V549M153.5 113.500V549M158.5 113.500V549M161.5 113.500V549M165.5 113.500V549M171.5 113.500V549M174.5 113.500V549M178.5 113.500V549M182.5 113.500V549M186.5 113.500V549M190.5 113.500V549M193.5 113.500V549M197.5 113.500V549M201.5 113.500V549M208.5 113.500V549M212.5 113.500V549M216.5 113.500V549M220.5 113.500V549M224.5 113.500V549M226.5 113.500V549M236.5 113.500V549M241.5 113.500V549M243.5 113.500V549M247.5 113.500V549M252.5 113.500V549M259.5 113.500V549M263.5 113.500V549M268.5 113.500V549M271.5 113.500V549M275.5 113.500V549M280.5 113.500V549M284.5 113.500V549M288.5 113.500V549M292.5 113.500V549M296.5 113.500V549M300.5 113.500V549M307.5 113.500V549M311.5 113.500V549M316.5 113.500V549M319.5 113.500V549M323.5 113.500V549M327.5 113.500V549M331.5 113.500V549M335.5 113.500V549M339.5 113.500V549M343.5 113.500V549M352.5 113.500V549M356.5 113.500V549" stroke="#2459ad" stroke-width="1" fill="none"/><path d="M107 116L161 545M170 116L226 545M240 116L296 545M300 116L355 545" stroke="#1d4fa6" stroke-width="1.300" fill="none"/><path d="M105 113.500L27 137.500" stroke="#2459ad" stroke-width="1.100" fill="none"/><rect x="358.600" y="114.600" width="1476.300" height="420.800" fill="#000"/><rect x="361" y="97.8" width="1473.900" height="18.4" fill="url(#t0)"/><rect x="360.200" y="534.0" width="1474.700" height="17.2" fill="url(#t15)"/><rect x="444.05" y="498" width="1.300" height="35.5" fill="url(#vs)"/><rect x="468.25" y="498" width="1.300" height="35.5" fill="url(#vs)"/><rect x="456.15" y="513" width="1.300" height="20.5" fill="url(#vs)"/><rect x="480.15" y="117" width="1.300" height="249.0" fill="url(#vs)"/><rect x="480.20" y="109.300" width="1.200" height="7.700" fill="#2f86cc"/><rect x="480.15" y="498" width="1.300" height="35.5" fill="url(#vs)"/><rect x="492.05" y="117" width="1.300" height="273.0" fill="url(#vs)"/><rect x="492.10" y="109.300" width="1.200" height="7.700" fill="#2f86cc"/><rect x="492.05" y="498" width="1.300" height="35.5" fill="url(#vs)"/><rect x="495.95" y="498" width="1.300" height="35.5" fill="url(#vs)"/><rect x="499.95" y="404" width="1.300" height="7.0" fill="url(#vs)"/><rect x="503.95" y="498" width="1.300" height="35.5" fill="url(#vs)"/><rect x="512.05" y="117" width="1.300" height="416.5" fill="url(#vs)"/><rect x="512.10" y="109.300" width="1.200" height="7.700" fill="#2f86cc"/><rect x="516.05" y="117" width="1.300" height="272.0" fill="url(#vs)"/><rect x="516.10" y="109.300" width="1.200" height="7.700" fill="#2f86cc"/><rect x="516.05" y="498" width="1.300" height="35.5" fill="url(#vs)"/><rect x="520.05" y="432" width="1.300" height="101.5" fill="url(#vs)"/><rect x="524.05" y="117" width="1.300" height="416.5" fill="url(#vs)"/><rect x="524.10" y="109.300" width="1.200" height="7.700" fill="#2f86cc"/><rect x="528.05" y="117" width="1.300" height="416.5" fill="url(#vs)"/><rect x="528.10" y="109.300" width="1.200" height="7.700" fill="#2f86cc"/><rect x="532.05" y="117" width="1.300" height="416.5" fill="url(#vs)"/><rect x="532.10" y="109.300" width="1.200" height="7.700" fill="#2f86cc"/><rect x="536.05" y="117" width="1.300" height="416.5" fill="url(#vs)"/><rect x="536.10" y="109.300" width="1.200" height="7.700" fill="#2f86cc"/><rect x="540.05" y="117" width="1.300" height="416.5" fill="url(#vs)"/><rect x="540.10" y="109.300" width="1.200" height="7.700" fill="#2f86cc"/><rect x="544.05" y="117" width="1.300" height="416.5" fill="url(#vs2)"/><rect x="544.10" y="109.300" width="1.200" height="7.700" fill="#2f86cc"/><rect x="548.05" y="117" width="1.300" height="416.5" fill="url(#vs2)"/><rect x="548.10" y="109.300" width="1.200" height="7.700" fill="#2f86cc"/><rect x="552.05" y="117" width="1.300" height="416.5" fill="url(#vs2)"/><rect x="552.10" y="109.300" width="1.200" height="7.700" fill="#2f86cc"/><rect x="556.05" y="117" width="1.300" height="416.5" fill="url(#vs2)"/><rect x="556.10" y="109.300" width="1.200" height="7.700" fill="#2f86cc"/><rect x="560.05" y="117" width="1.300" height="416.5" fill="url(#vs2)"/><rect x="560.10" y="109.300" width="1.200" height="7.700" fill="#2f86cc"/><rect x="564.05" y="498" width="1.300" height="35.5" fill="url(#vs2)"/><rect x="568.05" y="117" width="1.300" height="416.5" fill="url(#vs2)"/><rect x="568.10" y="109.300" width="1.200" height="7.700" fill="#2f86cc"/><rect x="572.05" y="117" width="1.300" height="87.0" fill="url(#vs2)"/><rect x="572.10" y="109.300" width="1.200" height="7.700" fill="#2f86cc"/><rect x="572.05" y="498" width="1.300" height="35.5" fill="url(#vs2)"/><rect x="576.05" y="498" width="1.300" height="35.5" fill="url(#vs2)"/><rect x="580.05" y="117" width="1.300" height="363.0" fill="url(#vs2)"/><rect x="580.10" y="109.300" width="1.200" height="7.700" fill="#2f86cc"/><rect x="584.05" y="117" width="1.300" height="213.0" fill="url(#vs2)"/><rect x="584.10" y="109.300" width="1.200" height="7.700" fill="#2f86cc"/><rect x="580.05" y="498" width="1.300" height="35.5" fill="url(#vs2)"/><rect x="584.05" y="498" width="1.300" height="35.5" fill="url(#vs2)"/><rect x="588.05" y="498" width="1.300" height="35.5" fill="url(#vs2)"/><rect x="592.05" y="117" width="1.300" height="363.0" fill="url(#vs2)"/><rect x="592.10" y="109.300" width="1.200" height="7.700" fill="#2f86cc"/><rect x="596.05" y="117" width="1.300" height="246.0" fill="url(#vs2)"/><rect x="596.10" y="109.300" width="1.200" height="7.700" fill="#2f86cc"/><rect x="592.05" y="498" width="1.300" height="35.5" fill="url(#vs2)"/><rect x="596.05" y="498" width="1.300" height="35.5" fill="url(#vs2)"/><rect x="600.05" y="498" width="1.300" height="35.5" fill="url(#vs2)"/><rect x="604.05" y="117" width="1.300" height="363.0" fill="url(#vs2)"/><rect x="604.10" y="109.300" width="1.200" height="7.700" fill="#2f86cc"/><rect x="608.05" y="117" width="1.300" height="218.0" fill="url(#vs2)"/><rect x="608.10" y="109.300" width="1.200" height="7.700" fill="#2f86cc"/><rect x="604.05" y="498" width="1.300" height="35.5" fill="url(#vs2)"/><rect x="608.05" y="498" width="1.300" height="35.5" fill="url(#vs2)"/><rect x="620.15" y="117" width="1.300" height="246.0" fill="url(#vs2)"/><rect x="620.20" y="109.300" width="1.200" height="7.700" fill="#2f86cc"/><rect x="632.15" y="117" width="1.300" height="246.0" fill="url(#vs2)"/><rect x="632.20" y="109.300" width="1.200" height="7.700" fill="#2f86cc"/><rect x="612.05" y="498" width="1.300" height="35.5" fill="url(#vs2)"/><rect x="620.15" y="498" width="1.300" height="35.5" fill="url(#vs2)"/><rect x="624.15" y="498" width="1.300" height="35.5" fill="url(#vs2)"/><rect x="632.15" y="498" width="1.300" height="35.5" fill="url(#vs2)"/><rect x="640.15" y="498" width="1.300" height="35.5" fill="url(#vs2)"/><rect x="666.95" y="117" width="1.300" height="4.0" fill="url(#vs2)"/><rect x="667.00" y="109.300" width="1.200" height="7.700" fill="#2f86cc"/><rect x="816.85" y="117" width="1.300" height="271.0" fill="url(#vs)"/><rect x="816.90" y="109.300" width="1.200" height="7.700" fill="#2f86cc"/><rect x="828.85" y="117" width="1.300" height="293.5" fill="url(#vs)"/><rect x="828.90" y="109.300" width="1.200" height="7.700" fill="#2f86cc"/><rect x="844.85" y="117" width="1.300" height="293.0" fill="url(#vs)"/><rect x="844.90" y="109.300" width="1.200" height="7.700" fill="#2f86cc"/><rect x="848.85" y="117" width="1.300" height="416.5" fill="url(#vs)"/><rect x="848.90" y="109.300" width="1.200" height="7.700" fill="#2f86cc"/><rect x="856.85" y="117" width="1.300" height="98.0" fill="url(#vs)"/><rect x="856.90" y="109.300" width="1.200" height="7.700" fill="#2f86cc"/><rect x="856.85" y="253" width="1.300" height="27.0" fill="url(#vs)"/><rect x="860.85" y="117" width="1.300" height="416.5" fill="url(#vs)"/><rect x="860.90" y="109.300" width="1.200" height="7.700" fill="#2f86cc"/><rect x="868.85" y="117" width="1.300" height="416.5" fill="url(#vs)"/><rect x="868.90" y="109.300" width="1.200" height="7.700" fill="#2f86cc"/><rect x="872.85" y="117" width="1.300" height="416.5" fill="url(#vs)"/><rect x="872.90" y="109.300" width="1.200" height="7.700" fill="#2f86cc"/><rect x="880.85" y="117" width="1.300" height="298.0" fill="url(#vs)"/><rect x="880.90" y="109.300" width="1.200" height="7.700" fill="#2f86cc"/><rect x="884.85" y="117" width="1.300" height="416.5" fill="url(#vs)"/><rect x="884.90" y="109.300" width="1.200" height="7.700" fill="#2f86cc"/><rect x="892.85" y="117" width="1.300" height="416.5" fill="url(#vs)"/><rect x="892.90" y="109.300" width="1.200" height="7.700" fill="#2f86cc"/><rect x="896.85" y="117" width="1.300" height="416.5" fill="url(#vs)"/><rect x="896.90" y="109.300" width="1.200" height="7.700" fill="#2f86cc"/><rect x="900.85" y="117" width="1.300" height="416.5" fill="url(#vs2)"/><rect x="900.90" y="109.300" width="1.200" height="7.700" fill="#2f86cc"/><rect x="908.85" y="117" width="1.300" height="247.0" fill="url(#vs2)"/><rect x="908.90" y="109.300" width="1.200" height="7.700" fill="#2f86cc"/><rect x="916.85" y="117" width="1.300" height="416.5" fill="url(#vs2)"/><rect x="916.90" y="109.300" width="1.200" height="7.700" fill="#2f86cc"/><rect x="928.85" y="117" width="1.300" height="219.0" fill="url(#vs2)"/><rect x="928.90" y="109.300" width="1.200" height="7.700" fill="#2f86cc"/><rect x="932.85" y="117" width="1.300" height="358.0" fill="url(#vs2)"/><rect x="932.90" y="109.300" width="1.200" height="7.700" fill="#2f86cc"/><rect x="936.85" y="117" width="1.300" height="358.0" fill="url(#vs2)"/><rect x="936.90" y="109.300" width="1.200" height="7.700" fill="#2f86cc"/><rect x="952.85" y="117" width="1.300" height="245.0" fill="url(#vs2)"/><rect x="952.90" y="109.300" width="1.200" height="7.700" fill="#2f86cc"/><rect x="956.85" y="117" width="1.300" height="358.0" fill="url(#vs2)"/><rect x="956.90" y="109.300" width="1.200" height="7.700" fill="#2f86cc"/><rect x="972.85" y="117" width="1.300" height="228.0" fill="url(#vs2)"/><rect x="972.90" y="109.300" width="1.200" height="7.700" fill="#2f86cc"/><rect x="820.95" y="498.5" width="1.300" height="35.0" fill="url(#vs)"/><rect x="833.35" y="498.5" width="1.300" height="35.0" fill="url(#vs)"/><rect x="852.45" y="498.5" width="1.300" height="35.0" fill="url(#vs)"/><rect x="864.05" y="498.5" width="1.300" height="35.0" fill="url(#vs)"/><rect x="876.15" y="498.5" width="1.300" height="35.0" fill="url(#vs)"/><rect x="887.75" y="498.5" width="1.300" height="35.0" fill="url(#vs)"/><rect x="903.05" y="498.5" width="1.300" height="35.0" fill="url(#vs2)"/><rect x="908.15" y="498.5" width="1.300" height="35.0" fill="url(#vs2)"/><rect x="919.75" y="498.5" width="1.300" height="35.0" fill="url(#vs2)"/><rect x="928.55" y="498.5" width="1.300" height="35.0" fill="url(#vs2)"/><rect x="932.25" y="498.5" width="1.300" height="35.0" fill="url(#vs2)"/><rect x="935.95" y="498.5" width="1.300" height="35.0" fill="url(#vs2)"/><rect x="940.15" y="498.5" width="1.300" height="35.0" fill="url(#vs2)"/><rect x="952.65" y="498.5" width="1.300" height="35.0" fill="url(#vs2)"/><rect x="956.35" y="498.5" width="1.300" height="35.0" fill="url(#vs2)"/><rect x="961.05" y="498.5" width="1.300" height="35.0" fill="url(#vs2)"/><rect x="972.65" y="498.5" width="1.300" height="35.0" fill="url(#vs2)"/><rect x="976.35" y="498.5" width="1.300" height="35.0" fill="url(#vs2)"/><rect x="993.55" y="498.5" width="1.300" height="35.0" fill="url(#vs2)"/><rect x="1150.15" y="141" width="1.300" height="30.6" fill="url(#vs)"/><rect x="1150.15" y="194.8" width="1.300" height="85.8" fill="url(#vs)"/><rect x="1169.95" y="117" width="1.300" height="293.5" fill="url(#vs)"/><rect x="1170.00" y="109.300" width="1.200" height="7.700" fill="#2f86cc"/><rect x="1185.95" y="117" width="1.300" height="228.6" fill="url(#vs)"/><rect x="1186.00" y="109.300" width="1.200" height="7.700" fill="#2f86cc"/><rect x="1189.95" y="117" width="1.300" height="293.0" fill="url(#vs)"/><rect x="1190.00" y="109.300" width="1.200" height="7.700" fill="#2f86cc"/><rect x="1201.95" y="117" width="1.300" height="249.0" fill="url(#vs)"/><rect x="1202.00" y="109.300" width="1.200" height="7.700" fill="#2f86cc"/><rect x="1205.95" y="117" width="1.300" height="263.0" fill="url(#vs)"/><rect x="1206.00" y="109.300" width="1.200" height="7.700" fill="#2f86cc"/><rect x="1209.95" y="117" width="1.300" height="278.0" fill="url(#vs)"/><rect x="1210.00" y="109.300" width="1.200" height="7.700" fill="#2f86cc"/><rect x="1213.95" y="117" width="1.300" height="416.5" fill="url(#vs)"/><rect x="1214.00" y="109.300" width="1.200" height="7.700" fill="#2f86cc"/><rect x="1217.95" y="330" width="1.300" height="15.0" fill="url(#vs)"/><rect x="1221.95" y="117" width="1.300" height="416.5" fill="url(#vs)"/><rect x="1222.00" y="109.300" width="1.200" height="7.700" fill="#2f86cc"/><rect x="1225.95" y="117" width="1.300" height="416.5" fill="url(#vs)"/><rect x="1226.00" y="109.300" width="1.200" height="7.700" fill="#2f86cc"/><rect x="1229.95" y="117" width="1.300" height="416.5" fill="url(#vs)"/><rect x="1230.00" y="109.300" width="1.200" height="7.700" fill="#2f86cc"/><rect x="1233.95" y="117" width="1.300" height="416.5" fill="url(#vs)"/><rect x="1234.00" y="109.300" width="1.200" height="7.700" fill="#2f86cc"/><rect x="1237.95" y="117" width="1.300" height="416.5" fill="url(#vs)"/><rect x="1238.00" y="109.300" width="1.200" height="7.700" fill="#2f86cc"/><rect x="1241.95" y="117" width="1.300" height="416.5" fill="url(#vs)"/><rect x="1242.00" y="109.300" width="1.200" height="7.700" fill="#2f86cc"/><rect x="1245.95" y="117" width="1.300" height="416.5" fill="url(#vs)"/><rect x="1246.00" y="109.300" width="1.200" height="7.700" fill="#2f86cc"/><rect x="1249.95" y="117" width="1.300" height="416.5" fill="url(#vs2)"/><rect x="1250.00" y="109.300" width="1.200" height="7.700" fill="#2f86cc"/><rect x="1253.95" y="117" width="1.300" height="416.5" fill="url(#vs2)"/><rect x="1254.00" y="109.300" width="1.200" height="7.700" fill="#2f86cc"/><rect x="1257.95" y="117" width="1.300" height="416.5" fill="url(#vs2)"/><rect x="1258.00" y="109.300" width="1.200" height="7.700" fill="#2f86cc"/><rect x="1265.95" y="117" width="1.300" height="358.0" fill="url(#vs2)"/><rect x="1266.00" y="109.300" width="1.200" height="7.700" fill="#2f86cc"/><rect x="1269.95" y="117" width="1.300" height="358.0" fill="url(#vs2)"/><rect x="1270.00" y="109.300" width="1.200" height="7.700" fill="#2f86cc"/><rect x="1273.95" y="117" width="1.300" height="358.0" fill="url(#vs2)"/><rect x="1274.00" y="109.300" width="1.200" height="7.700" fill="#2f86cc"/><rect x="1281.95" y="117" width="1.300" height="358.0" fill="url(#vs2)"/><rect x="1282.00" y="109.300" width="1.200" height="7.700" fill="#2f86cc"/><rect x="1293.95" y="117" width="1.300" height="228.0" fill="url(#vs2)"/><rect x="1294.00" y="109.300" width="1.200" height="7.700" fill="#2f86cc"/><rect x="1297.95" y="117" width="1.300" height="358.0" fill="url(#vs2)"/><rect x="1298.00" y="109.300" width="1.200" height="7.700" fill="#2f86cc"/><rect x="1313.95" y="117" width="1.300" height="245.0" fill="url(#vs2)"/><rect x="1314.00" y="109.300" width="1.200" height="7.700" fill="#2f86cc"/><rect x="1165.95" y="498.5" width="1.300" height="35.0" fill="url(#vs)"/><rect x="1181.95" y="498.5" width="1.300" height="35.0" fill="url(#vs)"/><rect x="1185.95" y="498.5" width="1.300" height="35.0" fill="url(#vs)"/><rect x="1197.95" y="498.5" width="1.300" height="35.0" fill="url(#vs)"/><rect x="1201.95" y="498.5" width="1.300" height="35.0" fill="url(#vs)"/><rect x="1205.95" y="498.5" width="1.300" height="35.0" fill="url(#vs)"/><rect x="1209.95" y="498.5" width="1.300" height="35.0" fill="url(#vs)"/><rect x="1265.95" y="498.5" width="1.300" height="35.0" fill="url(#vs2)"/><rect x="1269.95" y="498.5" width="1.300" height="35.0" fill="url(#vs2)"/><rect x="1273.95" y="498.5" width="1.300" height="35.0" fill="url(#vs2)"/><rect x="1277.95" y="498.5" width="1.300" height="35.0" fill="url(#vs2)"/><rect x="1281.95" y="498.5" width="1.300" height="35.0" fill="url(#vs2)"/><rect x="1285.95" y="498.5" width="1.300" height="35.0" fill="url(#vs2)"/><rect x="1293.95" y="498.5" width="1.300" height="35.0" fill="url(#vs2)"/><rect x="1297.95" y="498.5" width="1.300" height="35.0" fill="url(#vs2)"/><rect x="1301.95" y="498.5" width="1.300" height="35.0" fill="url(#vs2)"/><rect x="1313.95" y="498.5" width="1.300" height="35.0" fill="url(#vs2)"/><rect x="1317.95" y="498.5" width="1.300" height="35.0" fill="url(#vs2)"/><rect x="1333.95" y="498.5" width="1.300" height="35.0" fill="url(#vs2)"/><rect x="1499.05" y="120" width="1.300" height="51.6" fill="url(#vs)"/><rect x="1515.05" y="117" width="1.300" height="249.5" fill="url(#vs)"/><rect x="1515.10" y="109.300" width="1.200" height="7.700" fill="#2f86cc"/><rect x="1535.05" y="117" width="1.300" height="293.5" fill="url(#vs)"/><rect x="1535.10" y="109.300" width="1.200" height="7.700" fill="#2f86cc"/><rect x="1539.05" y="117" width="1.300" height="293.5" fill="url(#vs)"/><rect x="1539.10" y="109.300" width="1.200" height="7.700" fill="#2f86cc"/><rect x="1551.05" y="117" width="1.300" height="416.5" fill="url(#vs)"/><rect x="1551.10" y="109.300" width="1.200" height="7.700" fill="#2f86cc"/><rect x="1555.05" y="117" width="1.300" height="293.0" fill="url(#vs)"/><rect x="1555.10" y="109.300" width="1.200" height="7.700" fill="#2f86cc"/><rect x="1559.05" y="117" width="1.300" height="33.0" fill="url(#vs)"/><rect x="1559.10" y="109.300" width="1.200" height="7.700" fill="#2f86cc"/><rect x="1563.05" y="117" width="1.300" height="11.0" fill="url(#vs)"/><rect x="1563.10" y="109.300" width="1.200" height="7.700" fill="#2f86cc"/><rect x="1567.05" y="117" width="1.300" height="303.0" fill="url(#vs)"/><rect x="1567.10" y="109.300" width="1.200" height="7.700" fill="#2f86cc"/><rect x="1567.05" y="498.5" width="1.300" height="35.0" fill="url(#vs)"/><rect x="1571.05" y="117" width="1.300" height="338.0" fill="url(#vs)"/><rect x="1571.10" y="109.300" width="1.200" height="7.700" fill="#2f86cc"/><rect x="1571.05" y="498.5" width="1.300" height="35.0" fill="url(#vs)"/><rect x="1575.05" y="117" width="1.300" height="373.0" fill="url(#vs)"/><rect x="1575.10" y="109.300" width="1.200" height="7.700" fill="#2f86cc"/><rect x="1575.05" y="498.5" width="1.300" height="35.0" fill="url(#vs)"/><rect x="1579.05" y="117" width="1.300" height="416.5" fill="url(#vs)"/><rect x="1579.10" y="109.300" width="1.200" height="7.700" fill="#2f86cc"/><rect x="1583.05" y="117" width="1.300" height="416.5" fill="url(#vs)"/><rect x="1583.10" y="109.300" width="1.200" height="7.700" fill="#2f86cc"/><rect x="1587.05" y="117" width="1.300" height="416.5" fill="url(#vs)"/><rect x="1587.10" y="109.300" width="1.200" height="7.700" fill="#2f86cc"/><rect x="1591.05" y="117" width="1.300" height="416.5" fill="url(#vs)"/><rect x="1591.10" y="109.300" width="1.200" height="7.700" fill="#2f86cc"/><rect x="1595.05" y="117" width="1.300" height="416.5" fill="url(#vs)"/><rect x="1595.10" y="109.300" width="1.200" height="7.700" fill="#2f86cc"/><rect x="1599.05" y="117" width="1.300" height="416.5" fill="url(#vs2)"/><rect x="1599.10" y="109.300" width="1.200" height="7.700" fill="#2f86cc"/><rect x="1603.05" y="117" width="1.300" height="416.5" fill="url(#vs2)"/><rect x="1603.10" y="109.300" width="1.200" height="7.700" fill="#2f86cc"/><rect x="1607.05" y="117" width="1.300" height="416.5" fill="url(#vs2)"/><rect x="1607.10" y="109.300" width="1.200" height="7.700" fill="#2f86cc"/><rect x="1615.05" y="117" width="1.300" height="275.0" fill="url(#vs2)"/><rect x="1615.10" y="109.300" width="1.200" height="7.700" fill="#2f86cc"/><rect x="1619.05" y="117" width="1.300" height="386.0" fill="url(#vs2)"/><rect x="1619.10" y="109.300" width="1.200" height="7.700" fill="#2f86cc"/><rect x="1623.05" y="117" width="1.300" height="275.0" fill="url(#vs2)"/><rect x="1623.10" y="109.300" width="1.200" height="7.700" fill="#2f86cc"/><rect x="1627.05" y="117" width="1.300" height="386.0" fill="url(#vs2)"/><rect x="1627.10" y="109.300" width="1.200" height="7.700" fill="#2f86cc"/><rect x="1639.05" y="117" width="1.300" height="140.0" fill="url(#vs2)"/><rect x="1639.10" y="109.300" width="1.200" height="7.700" fill="#2f86cc"/><rect x="1643.05" y="117" width="1.300" height="270.0" fill="url(#vs2)"/><rect x="1643.10" y="109.300" width="1.200" height="7.700" fill="#2f86cc"/><rect x="1651.05" y="117" width="1.300" height="252.0" fill="url(#vs2)"/><rect x="1651.10" y="109.300" width="1.200" height="7.700" fill="#2f86cc"/><rect x="1655.05" y="117" width="1.300" height="386.0" fill="url(#vs2)"/><rect x="1655.10" y="109.300" width="1.200" height="7.700" fill="#2f86cc"/><rect x="1671.05" y="117" width="1.300" height="131.0" fill="url(#vs2)"/><rect x="1671.10" y="109.300" width="1.200" height="7.700" fill="#2f86cc"/><rect x="1675.05" y="260" width="1.300" height="192.0" fill="url(#vs2)"/><rect x="1511.05" y="498.5" width="1.300" height="35.0" fill="url(#vs)"/><rect x="1531.05" y="498.5" width="1.300" height="35.0" fill="url(#vs)"/><rect x="1547.05" y="498.5" width="1.300" height="35.0" fill="url(#vs)"/><rect x="1559.05" y="498.5" width="1.300" height="35.0" fill="url(#vs)"/><rect x="1563.05" y="498.5" width="1.300" height="35.0" fill="url(#vs)"/><rect x="1611.05" y="498.5" width="1.300" height="35.0" fill="url(#vs2)"/><rect x="1615.05" y="498.5" width="1.300" height="35.0" fill="url(#vs2)"/><rect x="1623.05" y="498.5" width="1.300" height="35.0" fill="url(#vs2)"/><rect x="1631.05" y="498.5" width="1.300" height="35.0" fill="url(#vs2)"/><rect x="1635.05" y="498.5" width="1.300" height="35.0" fill="url(#vs2)"/><rect x="1639.05" y="498.5" width="1.300" height="35.0" fill="url(#vs2)"/><rect x="1643.05" y="498.5" width="1.300" height="35.0" fill="url(#vs2)"/><rect x="1651.05" y="498.5" width="1.300" height="35.0" fill="url(#vs2)"/><rect x="1671.05" y="498.5" width="1.300" height="35.0" fill="url(#vs2)"/><rect x="1675.05" y="498.5" width="1.300" height="35.0" fill="url(#vs2)"/><rect x="1679.05" y="498.5" width="1.300" height="35.0" fill="url(#vs2)"/><rect x="1834" y="110" width="1.200" height="425" fill="url(#vs)" opacity=".9"/><rect x="1459" y="498.400" width="1.400" height="34.500" fill="#e9e6e1"/><rect x="1459" y="503.600" width="1.400" height="18.400" fill="#b8402f"/><rect x="1455.400" y="534.700" width="3.800" height="17" fill="#e74c3c"/><rect x="1456.800" y="536" width="1" height="11" fill="#fff"/></svg>
<span style="left:-0.3px;top:97.8px;font-size:15.55px;line-height:18.66px;letter-spacing:-0.420px;color:#111;">P0</span>
<span style="left:-0.3px;top:126.8px;font-size:15.55px;line-height:18.66px;letter-spacing:-0.420px;color:#111;">P1</span>
<span style="left:27.4px;top:126.8px;font-size:15.55px;line-height:18.66px;letter-spacing:-0.605px;color:#fff;">MPI</span>
<span style="left:-0.3px;top:155.8px;font-size:15.55px;line-height:18.66px;letter-spacing:-0.420px;color:#111;">P2</span>
<span style="left:27.4px;top:155.8px;font-size:15.55px;line-height:18.66px;letter-spacing:-0.605px;color:#fff;">MPI</span>
<span style="left:-0.3px;top:184.8px;font-size:15.55px;line-height:18.66px;letter-spacing:-0.420px;color:#111;">P3</span>
<span style="left:27.4px;top:184.8px;font-size:15.55px;line-height:18.66px;letter-spacing:-0.605px;color:#fff;">MPI</span>
<span style="left:-0.3px;top:213.8px;font-size:15.55px;line-height:18.66px;letter-spacing:-0.420px;color:#111;">P4</span>
<span style="left:27.4px;top:213.8px;font-size:15.55px;line-height:18.66px;letter-spacing:-0.605px;color:#fff;">MPI</span>
<span style="left:-0.3px;top:242.8px;font-size:15.55px;line-height:18.66px;letter-spacing:-0.420px;color:#111;">P5</span>
<span style="left:27.4px;top:242.8px;font-size:15.55px;line-height:18.66px;letter-spacing:-0.605px;color:#fff;">MPI</span>
<span style="left:-0.3px;top:271.8px;font-size:15.55px;line-height:18.66px;letter-spacing:-0.420px;color:#111;">P6</span>
<span style="left:27.4px;top:271.8px;font-size:15.55px;line-height:18.66px;letter-spacing:-0.605px;color:#fff;">MPI</span>
<span style="left:-0.3px;top:300.8px;font-size:15.55px;line-height:18.66px;letter-spacing:-0.420px;color:#111;">P7</span>
<span style="left:27.4px;top:300.8px;font-size:15.55px;line-height:18.66px;letter-spacing:-0.605px;color:#fff;">MPI</span>
<span style="left:-0.3px;top:329.8px;font-size:15.55px;line-height:18.66px;letter-spacing:-0.420px;color:#111;">P8</span>
<span style="left:27.4px;top:329.8px;font-size:15.55px;line-height:18.66px;letter-spacing:-0.605px;color:#fff;">MPI</span>
<span style="left:-0.3px;top:358.8px;font-size:15.55px;line-height:18.66px;letter-spacing:-0.420px;color:#111;">P9</span>
<span style="left:27.4px;top:358.8px;font-size:15.55px;line-height:18.66px;letter-spacing:-0.605px;color:#fff;">MPI</span>
<span style="left:-0.3px;top:387.8px;font-size:15.55px;line-height:18.66px;letter-spacing:-0.051px;color:#111;">P10</span>
<span style="left:27.4px;top:387.8px;font-size:15.55px;line-height:18.66px;letter-spacing:-0.605px;color:#fff;">MPI</span>
<span style="left:-0.3px;top:416.8px;font-size:15.55px;line-height:18.66px;letter-spacing:0.333px;color:#111;">P11</span>
<span style="left:27.4px;top:416.8px;font-size:15.55px;line-height:18.66px;letter-spacing:-0.605px;color:#fff;">MPI</span>
<span style="left:-0.3px;top:445.8px;font-size:15.55px;line-height:18.66px;letter-spacing:-0.051px;color:#111;">P12</span>
<span style="left:27.4px;top:445.8px;font-size:15.55px;line-height:18.66px;letter-spacing:-0.605px;color:#fff;">MPI</span>
<span style="left:-0.3px;top:474.8px;font-size:15.55px;line-height:18.66px;letter-spacing:-0.051px;color:#111;">P13</span>
<span style="left:27.4px;top:474.8px;font-size:15.55px;line-height:18.66px;letter-spacing:-0.605px;color:#fff;">MPI</span>
<span style="left:-0.3px;top:503.8px;font-size:15.55px;line-height:18.66px;letter-spacing:-0.051px;color:#111;">P14</span>
<span style="left:27.4px;top:503.8px;font-size:15.55px;line-height:18.66px;letter-spacing:-0.605px;color:#fff;">MPI</span>
<span style="left:-0.3px;top:532.8px;font-size:15.55px;line-height:18.66px;letter-spacing:-0.051px;color:#111;">P15</span>
<span style="left:27.4px;top:532.8px;font-size:15.55px;line-height:18.66px;letter-spacing:-0.605px;color:#fff;">MPI</span>
<div style="left:27px;top:97.8px;width:63.500px;height:18.4px;overflow:hidden">
<span style="left:0.4px;top:-0.0px;font-size:15.55px;line-height:18.66px;letter-spacing:0.536px;color:#000;">Application</span>
</div>
<div style="left:90.500px;top:97.8px;width:14.500px;height:18.4px;overflow:hidden">
<span style="left:0.4px;top:-0.0px;font-size:15.55px;line-height:18.66px;letter-spacing:0.164px;color:#000;">Ap</span>
</div>
<div style="left:0.0px;top:567.3px;width:1851.0px;height:4.9px;background:#808786;"></div>
<div style="left:0.0px;top:572.2px;width:1851.0px;height:51.3px;background:#fff;"></div>
<div style="left:0.0px;top:608.6px;width:1851.0px;height:1.2px;background:#c8c8c8;"></div>
<div style="left:84.0px;top:572.2px;width:1.1px;height:36.6px;background:#9c9c9c;"></div>
<span style="left:66.5px;top:572.4px;font-size:15.70px;line-height:18.84px;letter-spacing:0.321px;color:#111;">0.2 s</span>
<div style="left:157.0px;top:572.2px;width:1.1px;height:36.6px;background:#9c9c9c;"></div>
<span style="left:139.4px;top:590.1px;font-size:15.70px;line-height:18.84px;letter-spacing:0.321px;color:#111;">0.4 s</span>
<div style="left:229.9px;top:572.2px;width:1.1px;height:36.6px;background:#9c9c9c;"></div>
<span style="left:212.4px;top:572.4px;font-size:15.70px;line-height:18.84px;letter-spacing:0.321px;color:#111;">0.6 s</span>
<div style="left:302.9px;top:572.2px;width:1.1px;height:36.6px;background:#9c9c9c;"></div>
<span style="left:285.3px;top:590.1px;font-size:15.70px;line-height:18.84px;letter-spacing:0.321px;color:#111;">0.8 s</span>
<div style="left:375.8px;top:572.2px;width:1.1px;height:36.6px;background:#9c9c9c;"></div>
<span style="left:358.3px;top:572.4px;font-size:15.70px;line-height:18.84px;letter-spacing:0.321px;color:#111;">1.0 s</span>
<div style="left:448.8px;top:572.2px;width:1.1px;height:36.6px;background:#9c9c9c;"></div>
<span style="left:431.2px;top:590.1px;font-size:15.70px;line-height:18.84px;letter-spacing:0.321px;color:#111;">1.2 s</span>
<div style="left:521.8px;top:572.2px;width:1.1px;height:36.6px;background:#9c9c9c;"></div>
<span style="left:504.2px;top:572.4px;font-size:15.70px;line-height:18.84px;letter-spacing:0.321px;color:#111;">1.4 s</span>
<div style="left:594.7px;top:572.2px;width:1.1px;height:36.6px;background:#9c9c9c;"></div>
<span style="left:577.1px;top:590.1px;font-size:15.70px;line-height:18.84px;letter-spacing:0.321px;color:#111;">1.6 s</span>
<div style="left:667.7px;top:572.2px;width:1.1px;height:36.6px;background:#9c9c9c;"></div>
<span style="left:650.1px;top:572.4px;font-size:15.70px;line-height:18.84px;letter-spacing:0.321px;color:#111;">1.8 s</span>
<div style="left:740.6px;top:572.2px;width:1.1px;height:36.6px;background:#9c9c9c;"></div>
<span style="left:723.0px;top:590.1px;font-size:15.70px;line-height:18.84px;letter-spacing:0.321px;color:#111;">2.0 s</span>
<div style="left:813.6px;top:572.2px;width:1.1px;height:36.6px;background:#9c9c9c;"></div>
<span style="left:796.0px;top:572.4px;font-size:15.70px;line-height:18.84px;letter-spacing:0.321px;color:#111;">2.2 s</span>
<div style="left:886.5px;top:572.2px;width:1.1px;height:36.6px;background:#9c9c9c;"></div>
<span style="left:868.9px;top:590.1px;font-size:15.70px;line-height:18.84px;letter-spacing:0.321px;color:#111;">2.4 s</span>
<div style="left:959.5px;top:572.2px;width:1.1px;height:36.6px;background:#9c9c9c;"></div>
<span style="left:941.9px;top:572.4px;font-size:15.70px;line-height:18.84px;letter-spacing:0.321px;color:#111;">2.6 s</span>
<div style="left:1032.4px;top:572.2px;width:1.1px;height:36.6px;background:#9c9c9c;"></div>
<span style="left:1014.8px;top:590.1px;font-size:15.70px;line-height:18.84px;letter-spacing:0.321px;color:#111;">2.8 s</span>
<div style="left:1105.4px;top:572.2px;width:1.1px;height:36.6px;background:#9c9c9c;"></div>
<span style="left:1087.8px;top:572.4px;font-size:15.70px;line-height:18.84px;letter-spacing:0.321px;color:#111;">3.0 s</span>
<div style="left:1178.3px;top:572.2px;width:1.1px;height:36.6px;background:#9c9c9c;"></div>
<span style="left:1160.7px;top:590.1px;font-size:15.70px;line-height:18.84px;letter-spacing:0.321px;color:#111;">3.2 s</span>
<div style="left:1251.2px;top:572.2px;width:1.1px;height:36.6px;background:#9c9c9c;"></div>
<span style="left:1233.7px;top:572.4px;font-size:15.70px;line-height:18.84px;letter-spacing:0.321px;color:#111;">3.4 s</span>
<div style="left:1324.2px;top:572.2px;width:1.1px;height:36.6px;background:#9c9c9c;"></div>
<span style="left:1306.6px;top:590.1px;font-size:15.70px;line-height:18.84px;letter-spacing:0.321px;color:#111;">3.6 s</span>
<div style="left:1397.2px;top:572.2px;width:1.1px;height:36.6px;background:#9c9c9c;"></div>
<span style="left:1379.6px;top:572.4px;font-size:15.70px;line-height:18.84px;letter-spacing:0.321px;color:#111;">3.8 s</span>
<div style="left:1470.1px;top:572.2px;width:1.1px;height:36.6px;background:#9c9c9c;"></div>
<span style="left:1452.5px;top:590.1px;font-size:15.70px;line-height:18.84px;letter-spacing:0.321px;color:#111;">4.0 s</span>
<div style="left:1543.0px;top:572.2px;width:1.1px;height:36.6px;background:#9c9c9c;"></div>
<span style="left:1525.5px;top:572.4px;font-size:15.70px;line-height:18.84px;letter-spacing:0.321px;color:#111;">4.2 s</span>
<div style="left:1616.0px;top:572.2px;width:1.1px;height:36.6px;background:#9c9c9c;"></div>
<span style="left:1598.4px;top:590.1px;font-size:15.70px;line-height:18.84px;letter-spacing:0.321px;color:#111;">4.4 s</span>
<div style="left:1689.0px;top:572.2px;width:1.1px;height:36.6px;background:#9c9c9c;"></div>
<span style="left:1671.4px;top:572.4px;font-size:15.70px;line-height:18.84px;letter-spacing:0.321px;color:#111;">4.6 s</span>
<div style="left:1761.9px;top:572.2px;width:1.1px;height:36.6px;background:#9c9c9c;"></div>
<span style="left:1744.3px;top:590.1px;font-size:15.70px;line-height:18.84px;letter-spacing:0.321px;color:#111;">4.8 s</span>
<svg style="left:3px;top:610px" width="10" height="13"><path d="M6.600 2v8.600L1.600 6.300z" fill="#3c3c3c"/></svg>
<div style="left:14.3px;top:613.9px;width:76.7px;height:5.8px;background:#b9b9b9;"></div>
<svg style="left:1838px;top:610px" width="10" height="13"><path d="M2.600 1.600v8.600l5-4.300z" fill="#3c3c3c"/></svg>
<svg style="left:1837px;top:573px" width="13" height="36"><path d="M1.600 9.800h8.400L5.800 4.800zM1.600 23.600h8.400L5.800 28.600z" fill="#3c3c3c"/><rect x="3.400" y="15.400" width="5" height="1.200" fill="#b9b9b9"/><rect x="3.400" y="17.600" width="5" height="1.200" fill="#b9b9b9"/></svg>
<div style="left:0.0px;top:623.5px;width:1851.0px;height:379.0px;background:#808786;"></div>
<div style="left:4.0px;top:639.6px;width:94.0px;height:21.0px;background:#fff;"></div>
<span style="left:19.5px;top:642.6px;font-size:12.72px;line-height:15.26px;letter-spacing:0.219px;color:#111;">Flat Profile</span>
<span style="left:117.5px;top:641.0px;font-size:12.72px;line-height:15.26px;letter-spacing:0.223px;color:#ecf0f1;">Load Balance</span>
<span style="left:232.5px;top:641.0px;font-size:12.72px;line-height:15.26px;letter-spacing:0.036px;color:#ecf0f1;">Call Tree</span>
<span style="left:320.3px;top:641.0px;font-size:12.72px;line-height:15.26px;letter-spacing:0.223px;color:#ecf0f1;">Call Graph</span>
<div style="left:0.0px;top:660.0px;width:472.5px;height:319.2px;background:#fff;"></div>
<div style="left:0.0px;top:665.5px;width:190.0px;height:21.6px;background:#fff;box-sizing:border-box;border:1.200px solid #9c9c9c;"></div>
<span style="left:6.0px;top:669.0px;font-size:12.72px;line-height:15.26px;letter-spacing:-0.043px;color:#111;">All_Processes</span>
<svg style="left:176px;top:672px" width="10" height="7"><path d="M.6 .6h8L4.600 5.200z" fill="#333"/></svg>
<div style="left:0.0px;top:692.6px;width:472.5px;height:1.0px;background:#e4e4e4;"></div>
<div style="left:1.5px;top:694.0px;width:180.7px;height:22.4px;background:#bdc3c7;"></div>
<span style="left:3.5px;top:697.7px;font-size:12.72px;line-height:15.26px;letter-spacing:0.369px;color:#111;">Name</span>
<div style="left:184.2px;top:694.0px;width:80.6px;height:22.4px;background:#bdc3c7;"></div>
<span style="left:186.7px;top:697.7px;font-size:12.72px;line-height:15.26px;letter-spacing:0.040px;color:#111;">TSelf</span>
<div style="left:267.0px;top:694.0px;width:39.0px;height:22.4px;background:#bdc3c7;"></div>
<span style="left:269.5px;top:697.7px;font-size:12.72px;line-height:15.26px;letter-spacing:0.040px;color:#111;">TSelf</span>
<div style="left:308.2px;top:694.0px;width:81.1px;height:22.4px;background:#bdc3c7;"></div>
<span style="left:310.7px;top:697.7px;font-size:12.72px;line-height:15.26px;letter-spacing:0.085px;color:#111;">TTotal</span>
<div style="left:391.2px;top:694.0px;width:46.0px;height:22.4px;background:#bdc3c7;"></div>
<span style="left:393.6px;top:697.7px;font-size:12.72px;line-height:15.26px;letter-spacing:0.085px;color:#111;">TTotal</span>
<div style="left:439.3px;top:694.0px;width:32.2px;height:22.4px;background:#bdc3c7;"></div>
<span style="left:442.0px;top:697.7px;font-size:12.72px;line-height:15.26px;letter-spacing:0.741px;color:#111;">#Cal</span>
<svg style="left:169px;top:699px" width="12" height="13"><path d="M1 12L6 1l5 11z" fill="#fff"/></svg>
<svg style="left:5px;top:722px" width="11" height="11"><path d="M9.600 1.600v8H1.600z" fill="#4a4a4a"/></svg>
<span style="left:29.5px;top:717.4px;font-size:15.70px;line-height:18.84px;letter-spacing:-0.124px;color:#111;">All_Processes</span>
<span style="left:44.7px;top:735.1px;font-size:15.70px;line-height:18.84px;letter-spacing:0.435px;color:#111;">Group Application</span>
<span style="left:44.7px;top:752.8px;font-size:15.70px;line-height:18.84px;letter-spacing:-0.082px;color:#111;">Group MPI</span>
<span style="left:188.4px;top:735.1px;font-size:15.70px;line-height:18.84px;letter-spacing:0.447px;color:#111;">57.5833 s</span>
<span style="left:197.8px;top:752.8px;font-size:15.70px;line-height:18.84px;letter-spacing:0.428px;color:#111;">21.722 s</span>
<span style="left:312.8px;top:735.1px;font-size:15.70px;line-height:18.84px;letter-spacing:0.447px;color:#111;">79.3054 s</span>
<span style="left:322.2px;top:752.8px;font-size:15.70px;line-height:18.84px;letter-spacing:0.428px;color:#111;">21.722 s</span>
<span style="left:442.2px;top:752.8px;font-size:15.70px;line-height:18.84px;letter-spacing:0.605px;color:#111;">250</span>
<div style="left:270.3px;top:737.8px;width:4.0px;height:13.5px;background:#2f8fe0;"></div>
<div style="left:394.0px;top:737.8px;width:4.0px;height:13.5px;background:#2f8fe0;"></div>
<div style="left:270.4px;top:755.7px;width:1.1px;height:13.6px;background:#e74c3c;"></div>
<div style="left:394.2px;top:755.7px;width:1.1px;height:13.6px;background:#e74c3c;"></div>
<svg style="left:4.0px;top:964.6px" width="8" height="12"><path d="M6 1.400v9.200L1 6z" fill="#3c3c3c"/></svg>
<div style="left:16.2px;top:967.6px;width:201.0px;height:6.1px;background:#b9b9b9;"></div>
<svg style="left:459.5px;top:964.6px" width="8" height="12"><path d="M1.500 1.400v9.200L6.500 6z" fill="#3c3c3c"/></svg>
<span style="left:4.9px;top:983.6px;font-size:12.72px;line-height:15.26px;letter-spacing:0.351px;color:#e3e7e8;">1.62742 s, 1060 Messages (merged into 80 Messages)</span>
<div style="left:478.0px;top:636.4px;width:318.4px;height:153.0px;background:#fff;"></div>
<div style="left:479.5px;top:637.9px;width:119.5px;height:22.6px;background:#bdc3c7;"></div>
<span style="left:481.7px;top:641.5px;font-size:12.72px;line-height:15.26px;letter-spacing:0.244px;color:#111;">Performance Issue</span>
<div style="left:601.3px;top:637.9px;width:97.7px;height:22.6px;background:#bdc3c7;"></div>
<span style="left:603.5px;top:641.5px;font-size:12.72px;line-height:15.26px;letter-spacing:0.442px;color:#111;">Duration (%)</span>
<div style="left:701.2px;top:637.9px;width:94.4px;height:22.6px;background:#bdc3c7;"></div>
<span style="left:703.4px;top:641.5px;font-size:12.72px;line-height:15.26px;letter-spacing:0.505px;color:#111;">Duration</span>
<span style="left:502.5px;top:661.7px;font-size:12.72px;line-height:15.26px;letter-spacing:0.417px;color:#111;">Wait at Barrier</span>
<span style="left:604.6px;top:661.7px;font-size:12.72px;line-height:15.26px;letter-spacing:0.436px;color:#111;">17.00%</span>
<span style="left:704.5px;top:661.7px;font-size:12.72px;line-height:15.26px;letter-spacing:0.424px;color:#111;">13.4804 s</span>
<span style="left:502.5px;top:676.6px;font-size:12.72px;line-height:15.26px;letter-spacing:0.289px;color:#111;">Late Sender</span>
<span style="left:604.6px;top:676.6px;font-size:12.72px;line-height:15.26px;letter-spacing:0.411px;color:#111;">0.01%</span>
<span style="left:704.5px;top:676.6px;font-size:12.72px;line-height:15.26px;letter-spacing:0.366px;color:#111;">5.534e-3 s</span>
<span style="left:502.5px;top:691.5px;font-size:12.72px;line-height:15.26px;letter-spacing:0.180px;color:#111;">Early Reduce</span>
<span style="left:604.6px;top:691.5px;font-size:12.72px;line-height:15.26px;letter-spacing:0.411px;color:#111;">0.00%</span>
<span style="left:704.5px;top:691.5px;font-size:12.72px;line-height:15.26px;letter-spacing:0.345px;color:#111;">1.01e-3 s</span>
<span style="left:502.5px;top:706.5px;font-size:12.72px;line-height:15.26px;letter-spacing:0.322px;color:#111;">Late Broadcast</span>
<span style="left:604.6px;top:706.5px;font-size:12.72px;line-height:15.26px;letter-spacing:0.411px;color:#111;">0.00%</span>
<span style="left:704.5px;top:706.5px;font-size:12.72px;line-height:15.26px;letter-spacing:0.353px;color:#111;">455e-6 s</span>
<span style="left:502.5px;top:721.4px;font-size:12.72px;line-height:15.26px;letter-spacing:0.260px;color:#111;">Late Receiver</span>
<span style="left:604.6px;top:721.4px;font-size:12.72px;line-height:15.26px;letter-spacing:0.411px;color:#111;">0.00%</span>
<span style="left:704.5px;top:721.4px;font-size:12.72px;line-height:15.26px;letter-spacing:0.353px;color:#111;">356e-6 s</span>
<span style="left:507.0px;top:737.0px;font-size:12.72px;line-height:15.26px;letter-spacing:0.322px;color:#2424f4;text-decoration:underline;">Show advanced...</span>
<svg style="left:483.0px;top:775.2px" width="8" height="12"><path d="M6 1.400v9.200L1 6z" fill="#3c3c3c"/></svg>
<div style="left:494.2px;top:778.4px;width:279.8px;height:6.0px;background:#b9b9b9;"></div>
<svg style="left:783.5px;top:775.2px" width="8" height="12"><path d="M1.500 1.400v9.200L6.500 6z" fill="#3c3c3c"/></svg>
<div style="left:482.8px;top:801.4px;width:99.4px;height:21.2px;background:#fff;"></div>
<span style="left:498.8px;top:804.0px;font-size:12.72px;line-height:15.26px;letter-spacing:0.429px;color:#111;">Description</span>
<span style="left:601.3px;top:801.9px;font-size:12.72px;line-height:15.26px;letter-spacing:0.210px;color:#a9b2b3;">Affected Processes</span>
<div style="left:749px;top:803px;width:18.500px;height:18px;overflow:hidden">
<span style="left:0.5px;top:-1.1px;font-size:12.72px;line-height:15.26px;letter-spacing:0.115px;color:#a9b2b3;">Sources</span>
</div>
<svg style="left:769px;top:802px" width="26" height="14"><path d="M6 3.400v7L2 6.900zM18.500 3.400v7l4-3.500z" fill="#e8ecec"/><rect x="11.600" y="5" width="1" height="1.400" fill="#aab2b2"/><rect x="11.600" y="9" width="1" height="1.400" fill="#aab2b2"/></svg>
<div style="left:477.2px;top:822.4px;width:319.4px;height:156.8px;background:#fff;"></div>
<span style="left:483.2px;top:828.2px;font-size:12.72px;line-height:15.26px;letter-spacing:0.383px;color:#111;font-style:italic;">Select performance issue to see details.</span>
<svg style="left:805px;top:637px" width="19" height="18"><rect x="1" y=".2" width="16.300" height="16.800" fill="#fff"/><path d="M4 3.600L14.600 14" stroke="#3c3c3c" stroke-width="1.200"/><path d="M1 .2h5L4.600 3.400 1 5.200zM17.300 17h-5l1.200-3.300 3.800-1.700z" fill="#000"/></svg>
<span style="left:971.6px;top:637.8px;font-size:12.72px;line-height:15.26px;letter-spacing:0.343px;color:#1c1c1c;">Total Time [s] (Sender by Receiver)</span>
<div style="left:801.0px;top:666.4px;width:531.0px;height:2.2px;background:#fbfcfc;"></div>
<div style="left:1005.6px;top:660.7px;width:6.4px;height:13.4px;background:#4d4d4d;"></div>
<div style="left:800.2px;top:677.2px;width:451.0px;height:302.3px;background:#fff;"></div>
<div style="left:801px;top:678.500px;width:54.500px;height:23.500px;background:linear-gradient(#fff,#e6e6e6)"></div>
<div style="left:800.200px;top:677.200px;width:436px;height:287.200px;overflow:hidden">
<div style="left:56.0px;top:1.4px;width:27.7px;height:22.7px;background:#bdc3c7;"></div>
<span style="left:62.5px;top:4.9px;font-size:12.72px;line-height:15.26px;letter-spacing:-0.344px;color:#111;">P0</span>
<div style="left:86.0px;top:1.4px;width:27.7px;height:22.7px;background:#bdc3c7;"></div>
<span style="left:92.5px;top:4.9px;font-size:12.72px;line-height:15.26px;letter-spacing:-0.344px;color:#111;">P1</span>
<div style="left:116.0px;top:1.4px;width:27.7px;height:22.7px;background:#bdc3c7;"></div>
<span style="left:122.5px;top:4.9px;font-size:12.72px;line-height:15.26px;letter-spacing:-0.344px;color:#111;">P2</span>
<div style="left:146.1px;top:1.4px;width:27.7px;height:22.7px;background:#bdc3c7;"></div>
<span style="left:152.5px;top:4.9px;font-size:12.72px;line-height:15.26px;letter-spacing:-0.344px;color:#111;">P3</span>
<div style="left:176.1px;top:1.4px;width:27.7px;height:22.7px;background:#bdc3c7;"></div>
<span style="left:182.5px;top:4.9px;font-size:12.72px;line-height:15.26px;letter-spacing:-0.344px;color:#111;">P4</span>
<div style="left:206.1px;top:1.4px;width:27.7px;height:22.7px;background:#bdc3c7;"></div>
<span style="left:212.6px;top:4.9px;font-size:12.72px;line-height:15.26px;letter-spacing:-0.344px;color:#111;">P5</span>
<div style="left:236.1px;top:1.4px;width:27.7px;height:22.7px;background:#bdc3c7;"></div>
<span style="left:242.6px;top:4.9px;font-size:12.72px;line-height:15.26px;letter-spacing:-0.344px;color:#111;">P6</span>
<div style="left:266.1px;top:1.4px;width:27.7px;height:22.7px;background:#bdc3c7;"></div>
<span style="left:272.6px;top:4.9px;font-size:12.72px;line-height:15.26px;letter-spacing:-0.344px;color:#111;">P7</span>
<div style="left:296.2px;top:1.4px;width:27.7px;height:22.7px;background:#bdc3c7;"></div>
<span style="left:302.6px;top:4.9px;font-size:12.72px;line-height:15.26px;letter-spacing:-0.344px;color:#111;">P8</span>
<div style="left:326.2px;top:1.4px;width:27.7px;height:22.7px;background:#bdc3c7;"></div>
<span style="left:332.6px;top:4.9px;font-size:12.72px;line-height:15.26px;letter-spacing:-0.344px;color:#111;">P9</span>
<div style="left:356.2px;top:1.4px;width:27.7px;height:22.7px;background:#bdc3c7;"></div>
<span style="left:358.8px;top:4.9px;font-size:12.72px;line-height:15.26px;letter-spacing:-0.042px;color:#111;">P10</span>
<div style="left:386.2px;top:1.4px;width:27.7px;height:22.7px;background:#bdc3c7;"></div>
<span style="left:388.9px;top:4.9px;font-size:12.72px;line-height:15.26px;letter-spacing:0.273px;color:#111;">P11</span>
<div style="left:416.2px;top:1.4px;width:27.7px;height:22.7px;background:#bdc3c7;"></div>
<span style="left:418.9px;top:4.9px;font-size:12.72px;line-height:15.26px;letter-spacing:-0.042px;color:#111;">P12</span>
<div style="left:2.2px;top:26.7px;width:51.6px;height:27.3px;background:#bdc3c7;"></div>
<span style="left:5.4px;top:33.6px;font-size:12.72px;line-height:15.26px;letter-spacing:-0.344px;color:#111;">P0</span>
<div style="left:84.8px;top:25.5px;width:30.0px;height:29.9px;background:#bfd5c9;"></div>
<div style="left:85.3px;top:26.0px;width:29.1px;height:29.0px;background:#36dea6;"></div>
<span style="left:94.1px;top:33.0px;font-size:12.72px;line-height:15.26px;letter-spacing:0.280px;color:#111;">...</span>
<div style="left:114.8px;top:25.5px;width:30.0px;height:29.9px;background:#bfd5c9;"></div>
<div style="left:115.3px;top:26.0px;width:29.1px;height:29.0px;background:#36dea6;"></div>
<span style="left:124.1px;top:33.0px;font-size:12.72px;line-height:15.26px;letter-spacing:0.280px;color:#111;">...</span>
<div style="left:144.9px;top:25.5px;width:30.0px;height:29.9px;background:#bfd5c9;"></div>
<div style="left:145.4px;top:26.0px;width:29.1px;height:29.0px;background:#36dea6;"></div>
<span style="left:154.1px;top:33.0px;font-size:12.72px;line-height:15.26px;letter-spacing:0.280px;color:#111;">...</span>
<div style="left:174.9px;top:25.5px;width:30.0px;height:29.9px;background:#bfd5c9;"></div>
<div style="left:175.4px;top:26.0px;width:29.1px;height:29.0px;background:#36dea6;"></div>
<span style="left:184.2px;top:33.0px;font-size:12.72px;line-height:15.26px;letter-spacing:0.280px;color:#111;">...</span>
<div style="left:204.9px;top:25.5px;width:30.0px;height:29.9px;background:#bfd5c9;"></div>
<div style="left:205.4px;top:26.0px;width:29.1px;height:29.0px;background:#36dea6;"></div>
<span style="left:214.2px;top:33.0px;font-size:12.72px;line-height:15.26px;letter-spacing:0.280px;color:#111;">...</span>
<div style="left:234.9px;top:25.5px;width:30.0px;height:29.9px;background:#bfd5c9;"></div>
<div style="left:235.4px;top:26.0px;width:29.1px;height:29.0px;background:#36dea6;"></div>
<span style="left:244.2px;top:33.0px;font-size:12.72px;line-height:15.26px;letter-spacing:0.280px;color:#111;">...</span>
<div style="left:264.9px;top:25.5px;width:30.0px;height:29.9px;background:#bfd5c9;"></div>
<div style="left:265.4px;top:26.0px;width:29.1px;height:29.0px;background:#37df69;"></div>
<span style="left:274.2px;top:33.0px;font-size:12.72px;line-height:15.26px;letter-spacing:0.280px;color:#111;">...</span>
<div style="left:295.0px;top:25.5px;width:30.0px;height:29.9px;background:#bfd5c9;"></div>
<div style="left:295.5px;top:26.0px;width:29.1px;height:29.0px;background:#36dea6;"></div>
<span style="left:304.2px;top:33.0px;font-size:12.72px;line-height:15.26px;letter-spacing:0.280px;color:#111;">...</span>
<div style="left:325.0px;top:25.5px;width:30.0px;height:29.9px;background:#bfd5c9;"></div>
<div style="left:325.5px;top:26.0px;width:29.1px;height:29.0px;background:#36dea6;"></div>
<span style="left:334.3px;top:33.0px;font-size:12.72px;line-height:15.26px;letter-spacing:0.280px;color:#111;">...</span>
<div style="left:355.0px;top:25.5px;width:30.0px;height:29.9px;background:#bfd5c9;"></div>
<div style="left:355.5px;top:26.0px;width:29.1px;height:29.0px;background:#36dea6;"></div>
<span style="left:364.3px;top:33.0px;font-size:12.72px;line-height:15.26px;letter-spacing:0.280px;color:#111;">...</span>
<div style="left:385.0px;top:25.5px;width:30.0px;height:29.9px;background:#bfd5c9;"></div>
<div style="left:385.5px;top:26.0px;width:29.1px;height:29.0px;background:#37df69;"></div>
<span style="left:394.3px;top:33.0px;font-size:12.72px;line-height:15.26px;letter-spacing:0.280px;color:#111;">...</span>
<div style="left:415.0px;top:25.5px;width:30.0px;height:29.9px;background:#bfd5c9;"></div>
<div style="left:415.5px;top:26.0px;width:29.1px;height:29.0px;background:#43e037;"></div>
<span style="left:424.3px;top:33.0px;font-size:12.72px;line-height:15.26px;letter-spacing:0.280px;color:#111;">...</span>
<div style="left:2.2px;top:56.6px;width:51.6px;height:27.3px;background:#bdc3c7;"></div>
<span style="left:5.4px;top:63.5px;font-size:12.72px;line-height:15.26px;letter-spacing:-0.344px;color:#111;">P1</span>
<div style="left:54.8px;top:55.4px;width:30.0px;height:29.9px;background:#bfd5c9;"></div>
<div style="left:55.3px;top:55.9px;width:29.1px;height:29.0px;background:#36dea6;"></div>
<span style="left:64.1px;top:62.9px;font-size:12.72px;line-height:15.26px;letter-spacing:0.280px;color:#111;">...</span>
<div style="left:114.8px;top:55.4px;width:30.0px;height:29.9px;background:#bfd5c9;"></div>
<div style="left:115.3px;top:55.9px;width:29.1px;height:29.0px;background:#36dea6;"></div>
<span style="left:124.1px;top:62.9px;font-size:12.72px;line-height:15.26px;letter-spacing:0.280px;color:#111;">...</span>
<div style="left:144.9px;top:55.4px;width:30.0px;height:29.9px;background:#bfd5c9;"></div>
<div style="left:145.4px;top:55.9px;width:29.1px;height:29.0px;background:#36dea6;"></div>
<span style="left:154.1px;top:62.9px;font-size:12.72px;line-height:15.26px;letter-spacing:0.280px;color:#111;">...</span>
<div style="left:174.9px;top:55.4px;width:30.0px;height:29.9px;background:#bfd5c9;"></div>
<div style="left:175.4px;top:55.9px;width:29.1px;height:29.0px;background:#36dea6;"></div>
<span style="left:184.2px;top:62.9px;font-size:12.72px;line-height:15.26px;letter-spacing:0.280px;color:#111;">...</span>
<div style="left:204.9px;top:55.4px;width:30.0px;height:29.9px;background:#bfd5c9;"></div>
<div style="left:205.4px;top:55.9px;width:29.1px;height:29.0px;background:#36dea6;"></div>
<span style="left:214.2px;top:62.9px;font-size:12.72px;line-height:15.26px;letter-spacing:0.280px;color:#111;">...</span>
<div style="left:234.9px;top:55.4px;width:30.0px;height:29.9px;background:#bfd5c9;"></div>
<div style="left:235.4px;top:55.9px;width:29.1px;height:29.0px;background:#36dea6;"></div>
<span style="left:244.2px;top:62.9px;font-size:12.72px;line-height:15.26px;letter-spacing:0.280px;color:#111;">...</span>
<div style="left:264.9px;top:55.4px;width:30.0px;height:29.9px;background:#bfd5c9;"></div>
<div style="left:265.4px;top:55.9px;width:29.1px;height:29.0px;background:#36dea6;"></div>
<span style="left:274.2px;top:62.9px;font-size:12.72px;line-height:15.26px;letter-spacing:0.280px;color:#111;">...</span>
<div style="left:295.0px;top:55.4px;width:30.0px;height:29.9px;background:#bfd5c9;"></div>
<div style="left:295.5px;top:55.9px;width:29.1px;height:29.0px;background:#36dea6;"></div>
<span style="left:304.2px;top:62.9px;font-size:12.72px;line-height:15.26px;letter-spacing:0.280px;color:#111;">...</span>
<div style="left:325.0px;top:55.4px;width:30.0px;height:29.9px;background:#bfd5c9;"></div>
<div style="left:325.5px;top:55.9px;width:29.1px;height:29.0px;background:#36dea6;"></div>
<span style="left:334.3px;top:62.9px;font-size:12.72px;line-height:15.26px;letter-spacing:0.280px;color:#111;">...</span>
<div style="left:355.0px;top:55.4px;width:30.0px;height:29.9px;background:#bfd5c9;"></div>
<div style="left:355.5px;top:55.9px;width:29.1px;height:29.0px;background:#36dea6;"></div>
<span style="left:364.3px;top:62.9px;font-size:12.72px;line-height:15.26px;letter-spacing:0.280px;color:#111;">...</span>
<div style="left:385.0px;top:55.4px;width:30.0px;height:29.9px;background:#bfd5c9;"></div>
<div style="left:385.5px;top:55.9px;width:29.1px;height:29.0px;background:#37df69;"></div>
<span style="left:394.3px;top:62.9px;font-size:12.72px;line-height:15.26px;letter-spacing:0.280px;color:#111;">...</span>
<div style="left:415.0px;top:55.4px;width:30.0px;height:29.9px;background:#bfd5c9;"></div>
<div style="left:415.5px;top:55.9px;width:29.1px;height:29.0px;background:#43e037;"></div>
<span style="left:424.3px;top:62.9px;font-size:12.72px;line-height:15.26px;letter-spacing:0.280px;color:#111;">...</span>
<div style="left:2.2px;top:86.6px;width:51.6px;height:27.3px;background:#bdc3c7;"></div>
<span style="left:5.4px;top:93.4px;font-size:12.72px;line-height:15.26px;letter-spacing:-0.344px;color:#111;">P2</span>
<div style="left:54.8px;top:85.4px;width:30.0px;height:29.9px;background:#bfd5c9;"></div>
<div style="left:55.3px;top:85.9px;width:29.1px;height:29.0px;background:#36dea6;"></div>
<span style="left:64.1px;top:92.8px;font-size:12.72px;line-height:15.26px;letter-spacing:0.280px;color:#111;">...</span>
<div style="left:84.8px;top:85.4px;width:30.0px;height:29.9px;background:#bfd5c9;"></div>
<div style="left:85.3px;top:85.9px;width:29.1px;height:29.0px;background:#36dea6;"></div>
<span style="left:94.1px;top:92.8px;font-size:12.72px;line-height:15.26px;letter-spacing:0.280px;color:#111;">...</span>
<div style="left:144.9px;top:85.4px;width:30.0px;height:29.9px;background:#bfd5c9;"></div>
<div style="left:145.4px;top:85.9px;width:29.1px;height:29.0px;background:#36dea6;"></div>
<span style="left:154.1px;top:92.8px;font-size:12.72px;line-height:15.26px;letter-spacing:0.280px;color:#111;">...</span>
<div style="left:174.9px;top:85.4px;width:30.0px;height:29.9px;background:#bfd5c9;"></div>
<div style="left:175.4px;top:85.9px;width:29.1px;height:29.0px;background:#36dea6;"></div>
<span style="left:184.2px;top:92.8px;font-size:12.72px;line-height:15.26px;letter-spacing:0.280px;color:#111;">...</span>
<div style="left:204.9px;top:85.4px;width:30.0px;height:29.9px;background:#bfd5c9;"></div>
<div style="left:205.4px;top:85.9px;width:29.1px;height:29.0px;background:#36dea6;"></div>
<span style="left:214.2px;top:92.8px;font-size:12.72px;line-height:15.26px;letter-spacing:0.280px;color:#111;">...</span>
<div style="left:234.9px;top:85.4px;width:30.0px;height:29.9px;background:#bfd5c9;"></div>
<div style="left:235.4px;top:85.9px;width:29.1px;height:29.0px;background:#36dea6;"></div>
<span style="left:244.2px;top:92.8px;font-size:12.72px;line-height:15.26px;letter-spacing:0.280px;color:#111;">...</span>
<div style="left:264.9px;top:85.4px;width:30.0px;height:29.9px;background:#bfd5c9;"></div>
<div style="left:265.4px;top:85.9px;width:29.1px;height:29.0px;background:#37df69;"></div>
<span style="left:274.2px;top:92.8px;font-size:12.72px;line-height:15.26px;letter-spacing:0.280px;color:#111;">...</span>
<div style="left:295.0px;top:85.4px;width:30.0px;height:29.9px;background:#bfd5c9;"></div>
<div style="left:295.5px;top:85.9px;width:29.1px;height:29.0px;background:#36dea6;"></div>
<span style="left:304.2px;top:92.8px;font-size:12.72px;line-height:15.26px;letter-spacing:0.280px;color:#111;">...</span>
<div style="left:325.0px;top:85.4px;width:30.0px;height:29.9px;background:#bfd5c9;"></div>
<div style="left:325.5px;top:85.9px;width:29.1px;height:29.0px;background:#36dea6;"></div>
<span style="left:334.3px;top:92.8px;font-size:12.72px;line-height:15.26px;letter-spacing:0.280px;color:#111;">...</span>
<div style="left:355.0px;top:85.4px;width:30.0px;height:29.9px;background:#bfd5c9;"></div>
<div style="left:355.5px;top:85.9px;width:29.1px;height:29.0px;background:#36dea6;"></div>
<span style="left:364.3px;top:92.8px;font-size:12.72px;line-height:15.26px;letter-spacing:0.280px;color:#111;">...</span>
<div style="left:385.0px;top:85.4px;width:30.0px;height:29.9px;background:#bfd5c9;"></div>
<div style="left:385.5px;top:85.9px;width:29.1px;height:29.0px;background:#37df69;"></div>
<span style="left:394.3px;top:92.8px;font-size:12.72px;line-height:15.26px;letter-spacing:0.280px;color:#111;">...</span>
<div style="left:415.0px;top:85.4px;width:30.0px;height:29.9px;background:#bfd5c9;"></div>
<div style="left:415.5px;top:85.9px;width:29.1px;height:29.0px;background:#43e037;"></div>
<span style="left:424.3px;top:92.8px;font-size:12.72px;line-height:15.26px;letter-spacing:0.280px;color:#111;">...</span>
<div style="left:2.2px;top:116.5px;width:51.6px;height:27.3px;background:#bdc3c7;"></div>
<span style="left:5.4px;top:123.4px;font-size:12.72px;line-height:15.26px;letter-spacing:-0.344px;color:#111;">P3</span>
<div style="left:54.8px;top:115.3px;width:30.0px;height:29.9px;background:#bfd5c9;"></div>
<div style="left:55.3px;top:115.8px;width:29.1px;height:29.0px;background:#36dea6;"></div>
<span style="left:64.1px;top:122.8px;font-size:12.72px;line-height:15.26px;letter-spacing:0.280px;color:#111;">...</span>
<div style="left:84.8px;top:115.3px;width:30.0px;height:29.9px;background:#bfd5c9;"></div>
<div style="left:85.3px;top:115.8px;width:29.1px;height:29.0px;background:#36dea6;"></div>
<span style="left:94.1px;top:122.8px;font-size:12.72px;line-height:15.26px;letter-spacing:0.280px;color:#111;">...</span>
<div style="left:114.8px;top:115.3px;width:30.0px;height:29.9px;background:#bfd5c9;"></div>
<div style="left:115.3px;top:115.8px;width:29.1px;height:29.0px;background:#36dea6;"></div>
<span style="left:124.1px;top:122.8px;font-size:12.72px;line-height:15.26px;letter-spacing:0.280px;color:#111;">...</span>
<div style="left:174.9px;top:115.3px;width:30.0px;height:29.9px;background:#bfd5c9;"></div>
<div style="left:175.4px;top:115.8px;width:29.1px;height:29.0px;background:#36dea6;"></div>
<span style="left:184.2px;top:122.8px;font-size:12.72px;line-height:15.26px;letter-spacing:0.280px;color:#111;">...</span>
<div style="left:204.9px;top:115.3px;width:30.0px;height:29.9px;background:#bfd5c9;"></div>
<div style="left:205.4px;top:115.8px;width:29.1px;height:29.0px;background:#36dea6;"></div>
<span style="left:214.2px;top:122.8px;font-size:12.72px;line-height:15.26px;letter-spacing:0.280px;color:#111;">...</span>
<div style="left:234.9px;top:115.3px;width:30.0px;height:29.9px;background:#bfd5c9;"></div>
<div style="left:235.4px;top:115.8px;width:29.1px;height:29.0px;background:#36dea6;"></div>
<span style="left:244.2px;top:122.8px;font-size:12.72px;line-height:15.26px;letter-spacing:0.280px;color:#111;">...</span>
<div style="left:264.9px;top:115.3px;width:30.0px;height:29.9px;background:#bfd5c9;"></div>
<div style="left:265.4px;top:115.8px;width:29.1px;height:29.0px;background:#36dea6;"></div>
<span style="left:274.2px;top:122.8px;font-size:12.72px;line-height:15.26px;letter-spacing:0.280px;color:#111;">...</span>
<div style="left:295.0px;top:115.3px;width:30.0px;height:29.9px;background:#bfd5c9;"></div>
<div style="left:295.5px;top:115.8px;width:29.1px;height:29.0px;background:#36dea6;"></div>
<span style="left:304.2px;top:122.8px;font-size:12.72px;line-height:15.26px;letter-spacing:0.280px;color:#111;">...</span>
<div style="left:325.0px;top:115.3px;width:30.0px;height:29.9px;background:#bfd5c9;"></div>
<div style="left:325.5px;top:115.8px;width:29.1px;height:29.0px;background:#36dea6;"></div>
<span style="left:334.3px;top:122.8px;font-size:12.72px;line-height:15.26px;letter-spacing:0.280px;color:#111;">...</span>
<div style="left:355.0px;top:115.3px;width:30.0px;height:29.9px;background:#bfd5c9;"></div>
<div style="left:355.5px;top:115.8px;width:29.1px;height:29.0px;background:#36dea6;"></div>
<span style="left:364.3px;top:122.8px;font-size:12.72px;line-height:15.26px;letter-spacing:0.280px;color:#111;">...</span>
<div style="left:385.0px;top:115.3px;width:30.0px;height:29.9px;background:#bfd5c9;"></div>
<div style="left:385.5px;top:115.8px;width:29.1px;height:29.0px;background:#37df69;"></div>
<span style="left:394.3px;top:122.8px;font-size:12.72px;line-height:15.26px;letter-spacing:0.280px;color:#111;">...</span>
<div style="left:415.0px;top:115.3px;width:30.0px;height:29.9px;background:#bfd5c9;"></div>
<div style="left:415.5px;top:115.8px;width:29.1px;height:29.0px;background:#43e037;"></div>
<span style="left:424.3px;top:122.8px;font-size:12.72px;line-height:15.26px;letter-spacing:0.280px;color:#111;">...</span>
<div style="left:2.2px;top:146.4px;width:51.6px;height:27.3px;background:#bdc3c7;"></div>
<span style="left:5.4px;top:153.3px;font-size:12.72px;line-height:15.26px;letter-spacing:-0.344px;color:#111;">P4</span>
<div style="left:54.8px;top:145.2px;width:30.0px;height:29.9px;background:#bfd5c9;"></div>
<div style="left:55.3px;top:145.7px;width:29.1px;height:29.0px;background:#36dea6;"></div>
<span style="left:64.1px;top:152.7px;font-size:12.72px;line-height:15.26px;letter-spacing:0.280px;color:#111;">...</span>
<div style="left:84.8px;top:145.2px;width:30.0px;height:29.9px;background:#bfd5c9;"></div>
<div style="left:85.3px;top:145.7px;width:29.1px;height:29.0px;background:#36dea6;"></div>
<span style="left:94.1px;top:152.7px;font-size:12.72px;line-height:15.26px;letter-spacing:0.280px;color:#111;">...</span>
<div style="left:114.8px;top:145.2px;width:30.0px;height:29.9px;background:#bfd5c9;"></div>
<div style="left:115.3px;top:145.7px;width:29.1px;height:29.0px;background:#36dea6;"></div>
<span style="left:124.1px;top:152.7px;font-size:12.72px;line-height:15.26px;letter-spacing:0.280px;color:#111;">...</span>
<div style="left:144.9px;top:145.2px;width:30.0px;height:29.9px;background:#bfd5c9;"></div>
<div style="left:145.4px;top:145.7px;width:29.1px;height:29.0px;background:#36dea6;"></div>
<span style="left:154.1px;top:152.7px;font-size:12.72px;line-height:15.26px;letter-spacing:0.280px;color:#111;">...</span>
<div style="left:204.9px;top:145.2px;width:30.0px;height:29.9px;background:#bfd5c9;"></div>
<div style="left:205.4px;top:145.7px;width:29.1px;height:29.0px;background:#36dea6;"></div>
<span style="left:214.2px;top:152.7px;font-size:12.72px;line-height:15.26px;letter-spacing:0.280px;color:#111;">...</span>
<div style="left:234.9px;top:145.2px;width:30.0px;height:29.9px;background:#bfd5c9;"></div>
<div style="left:235.4px;top:145.7px;width:29.1px;height:29.0px;background:#36dea6;"></div>
<span style="left:244.2px;top:152.7px;font-size:12.72px;line-height:15.26px;letter-spacing:0.280px;color:#111;">...</span>
<div style="left:264.9px;top:145.2px;width:30.0px;height:29.9px;background:#bfd5c9;"></div>
<div style="left:265.4px;top:145.7px;width:29.1px;height:29.0px;background:#37df69;"></div>
<span style="left:274.2px;top:152.7px;font-size:12.72px;line-height:15.26px;letter-spacing:0.280px;color:#111;">...</span>
<div style="left:295.0px;top:145.2px;width:30.0px;height:29.9px;background:#bfd5c9;"></div>
<div style="left:295.5px;top:145.7px;width:29.1px;height:29.0px;background:#36dea6;"></div>
<span style="left:304.2px;top:152.7px;font-size:12.72px;line-height:15.26px;letter-spacing:0.280px;color:#111;">...</span>
<div style="left:325.0px;top:145.2px;width:30.0px;height:29.9px;background:#bfd5c9;"></div>
<div style="left:325.5px;top:145.7px;width:29.1px;height:29.0px;background:#36dea6;"></div>
<span style="left:334.3px;top:152.7px;font-size:12.72px;line-height:15.26px;letter-spacing:0.280px;color:#111;">...</span>
<div style="left:355.0px;top:145.2px;width:30.0px;height:29.9px;background:#bfd5c9;"></div>
<div style="left:355.5px;top:145.7px;width:29.1px;height:29.0px;background:#36dea6;"></div>
<span style="left:364.3px;top:152.7px;font-size:12.72px;line-height:15.26px;letter-spacing:0.280px;color:#111;">...</span>
<div style="left:385.0px;top:145.2px;width:30.0px;height:29.9px;background:#bfd5c9;"></div>
<div style="left:385.5px;top:145.7px;width:29.1px;height:29.0px;background:#37df69;"></div>
<span style="left:394.3px;top:152.7px;font-size:12.72px;line-height:15.26px;letter-spacing:0.280px;color:#111;">...</span>
<div style="left:415.0px;top:145.2px;width:30.0px;height:29.9px;background:#bfd5c9;"></div>
<div style="left:415.5px;top:145.7px;width:29.1px;height:29.0px;background:#43e037;"></div>
<span style="left:424.3px;top:152.7px;font-size:12.72px;line-height:15.26px;letter-spacing:0.280px;color:#111;">...</span>
<div style="left:2.2px;top:176.3px;width:51.6px;height:27.3px;background:#bdc3c7;"></div>
<span style="left:5.4px;top:183.2px;font-size:12.72px;line-height:15.26px;letter-spacing:-0.344px;color:#111;">P5</span>
<div style="left:54.8px;top:175.1px;width:30.0px;height:29.9px;background:#bfd5c9;"></div>
<div style="left:55.3px;top:175.6px;width:29.1px;height:29.0px;background:#36dea6;"></div>
<span style="left:64.1px;top:182.6px;font-size:12.72px;line-height:15.26px;letter-spacing:0.280px;color:#111;">...</span>
<div style="left:84.8px;top:175.1px;width:30.0px;height:29.9px;background:#bfd5c9;"></div>
<div style="left:85.3px;top:175.6px;width:29.1px;height:29.0px;background:#36dea6;"></div>
<span style="left:94.1px;top:182.6px;font-size:12.72px;line-height:15.26px;letter-spacing:0.280px;color:#111;">...</span>
<div style="left:114.8px;top:175.1px;width:30.0px;height:29.9px;background:#bfd5c9;"></div>
<div style="left:115.3px;top:175.6px;width:29.1px;height:29.0px;background:#36dea6;"></div>
<span style="left:124.1px;top:182.6px;font-size:12.72px;line-height:15.26px;letter-spacing:0.280px;color:#111;">...</span>
<div style="left:144.9px;top:175.1px;width:30.0px;height:29.9px;background:#bfd5c9;"></div>
<div style="left:145.4px;top:175.6px;width:29.1px;height:29.0px;background:#36dea6;"></div>
<span style="left:154.1px;top:182.6px;font-size:12.72px;line-height:15.26px;letter-spacing:0.280px;color:#111;">...</span>
<div style="left:174.9px;top:175.1px;width:30.0px;height:29.9px;background:#bfd5c9;"></div>
<div style="left:175.4px;top:175.6px;width:29.1px;height:29.0px;background:#36dea6;"></div>
<span style="left:184.2px;top:182.6px;font-size:12.72px;line-height:15.26px;letter-spacing:0.280px;color:#111;">...</span>
<div style="left:234.9px;top:175.1px;width:30.0px;height:29.9px;background:#bfd5c9;"></div>
<div style="left:235.4px;top:175.6px;width:29.1px;height:29.0px;background:#36dea6;"></div>
<span style="left:244.2px;top:182.6px;font-size:12.72px;line-height:15.26px;letter-spacing:0.280px;color:#111;">...</span>
<div style="left:264.9px;top:175.1px;width:30.0px;height:29.9px;background:#bfd5c9;"></div>
<div style="left:265.4px;top:175.6px;width:29.1px;height:29.0px;background:#36dea6;"></div>
<span style="left:274.2px;top:182.6px;font-size:12.72px;line-height:15.26px;letter-spacing:0.280px;color:#111;">...</span>
<div style="left:295.0px;top:175.1px;width:30.0px;height:29.9px;background:#bfd5c9;"></div>
<div style="left:295.5px;top:175.6px;width:29.1px;height:29.0px;background:#36dea6;"></div>
<span style="left:304.2px;top:182.6px;font-size:12.72px;line-height:15.26px;letter-spacing:0.280px;color:#111;">...</span>
<div style="left:325.0px;top:175.1px;width:30.0px;height:29.9px;background:#bfd5c9;"></div>
<div style="left:325.5px;top:175.6px;width:29.1px;height:29.0px;background:#36dea6;"></div>
<span style="left:334.3px;top:182.6px;font-size:12.72px;line-height:15.26px;letter-spacing:0.280px;color:#111;">...</span>
<div style="left:355.0px;top:175.1px;width:30.0px;height:29.9px;background:#bfd5c9;"></div>
<div style="left:355.5px;top:175.6px;width:29.1px;height:29.0px;background:#36dea6;"></div>
<span style="left:364.3px;top:182.6px;font-size:12.72px;line-height:15.26px;letter-spacing:0.280px;color:#111;">...</span>
<div style="left:385.0px;top:175.1px;width:30.0px;height:29.9px;background:#bfd5c9;"></div>
<div style="left:385.5px;top:175.6px;width:29.1px;height:29.0px;background:#37df69;"></div>
<span style="left:394.3px;top:182.6px;font-size:12.72px;line-height:15.26px;letter-spacing:0.280px;color:#111;">...</span>
<div style="left:415.0px;top:175.1px;width:30.0px;height:29.9px;background:#bfd5c9;"></div>
<div style="left:415.5px;top:175.6px;width:29.1px;height:29.0px;background:#43e037;"></div>
<span style="left:424.3px;top:182.6px;font-size:12.72px;line-height:15.26px;letter-spacing:0.280px;color:#111;">...</span>
<div style="left:2.2px;top:206.3px;width:51.6px;height:27.3px;background:#bdc3c7;"></div>
<span style="left:5.4px;top:213.1px;font-size:12.72px;line-height:15.26px;letter-spacing:-0.344px;color:#111;">P6</span>
<div style="left:54.8px;top:205.1px;width:30.0px;height:29.9px;background:#bfd5c9;"></div>
<div style="left:55.3px;top:205.6px;width:29.1px;height:29.0px;background:#36dea6;"></div>
<span style="left:64.1px;top:212.5px;font-size:12.72px;line-height:15.26px;letter-spacing:0.280px;color:#111;">...</span>
<div style="left:84.8px;top:205.1px;width:30.0px;height:29.9px;background:#bfd5c9;"></div>
<div style="left:85.3px;top:205.6px;width:29.1px;height:29.0px;background:#36dea6;"></div>
<span style="left:94.1px;top:212.5px;font-size:12.72px;line-height:15.26px;letter-spacing:0.280px;color:#111;">...</span>
<div style="left:114.8px;top:205.1px;width:30.0px;height:29.9px;background:#bfd5c9;"></div>
<div style="left:115.3px;top:205.6px;width:29.1px;height:29.0px;background:#36dea6;"></div>
<span style="left:124.1px;top:212.5px;font-size:12.72px;line-height:15.26px;letter-spacing:0.280px;color:#111;">...</span>
<div style="left:144.9px;top:205.1px;width:30.0px;height:29.9px;background:#bfd5c9;"></div>
<div style="left:145.4px;top:205.6px;width:29.1px;height:29.0px;background:#36dea6;"></div>
<span style="left:154.1px;top:212.5px;font-size:12.72px;line-height:15.26px;letter-spacing:0.280px;color:#111;">...</span>
<div style="left:174.9px;top:205.1px;width:30.0px;height:29.9px;background:#bfd5c9;"></div>
<div style="left:175.4px;top:205.6px;width:29.1px;height:29.0px;background:#36dea6;"></div>
<span style="left:184.2px;top:212.5px;font-size:12.72px;line-height:15.26px;letter-spacing:0.280px;color:#111;">...</span>
<div style="left:204.9px;top:205.1px;width:30.0px;height:29.9px;background:#bfd5c9;"></div>
<div style="left:205.4px;top:205.6px;width:29.1px;height:29.0px;background:#36dea6;"></div>
<span style="left:214.2px;top:212.5px;font-size:12.72px;line-height:15.26px;letter-spacing:0.280px;color:#111;">...</span>
<div style="left:264.9px;top:205.1px;width:30.0px;height:29.9px;background:#bfd5c9;"></div>
<div style="left:265.4px;top:205.6px;width:29.1px;height:29.0px;background:#36dea6;"></div>
<span style="left:274.2px;top:212.5px;font-size:12.72px;line-height:15.26px;letter-spacing:0.280px;color:#111;">...</span>
<div style="left:295.0px;top:205.1px;width:30.0px;height:29.9px;background:#bfd5c9;"></div>
<div style="left:295.5px;top:205.6px;width:29.1px;height:29.0px;background:#36dea6;"></div>
<span style="left:304.2px;top:212.5px;font-size:12.72px;line-height:15.26px;letter-spacing:0.280px;color:#111;">...</span>
<div style="left:325.0px;top:205.1px;width:30.0px;height:29.9px;background:#bfd5c9;"></div>
<div style="left:325.5px;top:205.6px;width:29.1px;height:29.0px;background:#36dea6;"></div>
<span style="left:334.3px;top:212.5px;font-size:12.72px;line-height:15.26px;letter-spacing:0.280px;color:#111;">...</span>
<div style="left:355.0px;top:205.1px;width:30.0px;height:29.9px;background:#bfd5c9;"></div>
<div style="left:355.5px;top:205.6px;width:29.1px;height:29.0px;background:#36dea6;"></div>
<span style="left:364.3px;top:212.5px;font-size:12.72px;line-height:15.26px;letter-spacing:0.280px;color:#111;">...</span>
<div style="left:385.0px;top:205.1px;width:30.0px;height:29.9px;background:#bfd5c9;"></div>
<div style="left:385.5px;top:205.6px;width:29.1px;height:29.0px;background:#37df69;"></div>
<span style="left:394.3px;top:212.5px;font-size:12.72px;line-height:15.26px;letter-spacing:0.280px;color:#111;">...</span>
<div style="left:415.0px;top:205.1px;width:30.0px;height:29.9px;background:#bfd5c9;"></div>
<div style="left:415.5px;top:205.6px;width:29.1px;height:29.0px;background:#43e037;"></div>
<span style="left:424.3px;top:212.5px;font-size:12.72px;line-height:15.26px;letter-spacing:0.280px;color:#111;">...</span>
<div style="left:2.2px;top:236.2px;width:51.6px;height:27.3px;background:#bdc3c7;"></div>
<span style="left:5.4px;top:243.1px;font-size:12.72px;line-height:15.26px;letter-spacing:-0.344px;color:#111;">P7</span>
<div style="left:54.8px;top:235.0px;width:30.0px;height:29.9px;background:#bfd5c9;"></div>
<div style="left:55.3px;top:235.5px;width:29.1px;height:29.0px;background:#36dea6;"></div>
<span style="left:64.1px;top:242.5px;font-size:12.72px;line-height:15.26px;letter-spacing:0.280px;color:#111;">...</span>
<div style="left:84.8px;top:235.0px;width:30.0px;height:29.9px;background:#bfd5c9;"></div>
<div style="left:85.3px;top:235.5px;width:29.1px;height:29.0px;background:#36dea6;"></div>
<span style="left:94.1px;top:242.5px;font-size:12.72px;line-height:15.26px;letter-spacing:0.280px;color:#111;">...</span>
<div style="left:114.8px;top:235.0px;width:30.0px;height:29.9px;background:#bfd5c9;"></div>
<div style="left:115.3px;top:235.5px;width:29.1px;height:29.0px;background:#36dea6;"></div>
<span style="left:124.1px;top:242.5px;font-size:12.72px;line-height:15.26px;letter-spacing:0.280px;color:#111;">...</span>
<div style="left:144.9px;top:235.0px;width:30.0px;height:29.9px;background:#bfd5c9;"></div>
<div style="left:145.4px;top:235.5px;width:29.1px;height:29.0px;background:#36dea6;"></div>
<span style="left:154.1px;top:242.5px;font-size:12.72px;line-height:15.26px;letter-spacing:0.280px;color:#111;">...</span>
<div style="left:174.9px;top:235.0px;width:30.0px;height:29.9px;background:#bfd5c9;"></div>
<div style="left:175.4px;top:235.5px;width:29.1px;height:29.0px;background:#36dea6;"></div>
<span style="left:184.2px;top:242.5px;font-size:12.72px;line-height:15.26px;letter-spacing:0.280px;color:#111;">...</span>
<div style="left:204.9px;top:235.0px;width:30.0px;height:29.9px;background:#bfd5c9;"></div>
<div style="left:205.4px;top:235.5px;width:29.1px;height:29.0px;background:#36dea6;"></div>
<span style="left:214.2px;top:242.5px;font-size:12.72px;line-height:15.26px;letter-spacing:0.280px;color:#111;">...</span>
<div style="left:234.9px;top:235.0px;width:30.0px;height:29.9px;background:#bfd5c9;"></div>
<div style="left:235.4px;top:235.5px;width:29.1px;height:29.0px;background:#36dea6;"></div>
<span style="left:244.2px;top:242.5px;font-size:12.72px;line-height:15.26px;letter-spacing:0.280px;color:#111;">...</span>
<div style="left:295.0px;top:235.0px;width:30.0px;height:29.9px;background:#bfd5c9;"></div>
<div style="left:295.5px;top:235.5px;width:29.1px;height:29.0px;background:#36dea6;"></div>
<span style="left:304.2px;top:242.5px;font-size:12.72px;line-height:15.26px;letter-spacing:0.280px;color:#111;">...</span>
<div style="left:325.0px;top:235.0px;width:30.0px;height:29.9px;background:#bfd5c9;"></div>
<div style="left:325.5px;top:235.5px;width:29.1px;height:29.0px;background:#36dea6;"></div>
<span style="left:334.3px;top:242.5px;font-size:12.72px;line-height:15.26px;letter-spacing:0.280px;color:#111;">...</span>
<div style="left:355.0px;top:235.0px;width:30.0px;height:29.9px;background:#bfd5c9;"></div>
<div style="left:355.5px;top:235.5px;width:29.1px;height:29.0px;background:#36dea6;"></div>
<span style="left:364.3px;top:242.5px;font-size:12.72px;line-height:15.26px;letter-spacing:0.280px;color:#111;">...</span>
<div style="left:385.0px;top:235.0px;width:30.0px;height:29.9px;background:#bfd5c9;"></div>
<div style="left:385.5px;top:235.5px;width:29.1px;height:29.0px;background:#37df69;"></div>
<span style="left:394.3px;top:242.5px;font-size:12.72px;line-height:15.26px;letter-spacing:0.280px;color:#111;">...</span>
<div style="left:415.0px;top:235.0px;width:30.0px;height:29.9px;background:#bfd5c9;"></div>
<div style="left:415.5px;top:235.5px;width:29.1px;height:29.0px;background:#43e037;"></div>
<span style="left:424.3px;top:242.5px;font-size:12.72px;line-height:15.26px;letter-spacing:0.280px;color:#111;">...</span>
<div style="left:2.2px;top:266.1px;width:51.6px;height:27.3px;background:#bdc3c7;"></div>
<span style="left:5.4px;top:273.0px;font-size:12.72px;line-height:15.26px;letter-spacing:-0.344px;color:#111;">P8</span>
<div style="left:54.8px;top:264.9px;width:30.0px;height:29.9px;background:#bfd5c9;"></div>
<div style="left:55.3px;top:265.4px;width:29.1px;height:29.0px;background:#36dea6;"></div>
<span style="left:64.1px;top:272.4px;font-size:12.72px;line-height:15.26px;letter-spacing:0.280px;color:#111;">...</span>
<div style="left:84.8px;top:264.9px;width:30.0px;height:29.9px;background:#bfd5c9;"></div>
<div style="left:85.3px;top:265.4px;width:29.1px;height:29.0px;background:#36dea6;"></div>
<span style="left:94.1px;top:272.4px;font-size:12.72px;line-height:15.26px;letter-spacing:0.280px;color:#111;">...</span>
<div style="left:114.8px;top:264.9px;width:30.0px;height:29.9px;background:#bfd5c9;"></div>
<div style="left:115.3px;top:265.4px;width:29.1px;height:29.0px;background:#36dea6;"></div>
<span style="left:124.1px;top:272.4px;font-size:12.72px;line-height:15.26px;letter-spacing:0.280px;color:#111;">...</span>
<div style="left:144.9px;top:264.9px;width:30.0px;height:29.9px;background:#bfd5c9;"></div>
<div style="left:145.4px;top:265.4px;width:29.1px;height:29.0px;background:#36dea6;"></div>
<span style="left:154.1px;top:272.4px;font-size:12.72px;line-height:15.26px;letter-spacing:0.280px;color:#111;">...</span>
<div style="left:174.9px;top:264.9px;width:30.0px;height:29.9px;background:#bfd5c9;"></div>
<div style="left:175.4px;top:265.4px;width:29.1px;height:29.0px;background:#36dea6;"></div>
<span style="left:184.2px;top:272.4px;font-size:12.72px;line-height:15.26px;letter-spacing:0.280px;color:#111;">...</span>
<div style="left:204.9px;top:264.9px;width:30.0px;height:29.9px;background:#bfd5c9;"></div>
<div style="left:205.4px;top:265.4px;width:29.1px;height:29.0px;background:#36dea6;"></div>
<span style="left:214.2px;top:272.4px;font-size:12.72px;line-height:15.26px;letter-spacing:0.280px;color:#111;">...</span>
<div style="left:234.9px;top:264.9px;width:30.0px;height:29.9px;background:#bfd5c9;"></div>
<div style="left:235.4px;top:265.4px;width:29.1px;height:29.0px;background:#36dea6;"></div>
<span style="left:244.2px;top:272.4px;font-size:12.72px;line-height:15.26px;letter-spacing:0.280px;color:#111;">...</span>
<div style="left:264.9px;top:264.9px;width:30.0px;height:29.9px;background:#bfd5c9;"></div>
<div style="left:265.4px;top:265.4px;width:29.1px;height:29.0px;background:#36dea6;"></div>
<span style="left:274.2px;top:272.4px;font-size:12.72px;line-height:15.26px;letter-spacing:0.280px;color:#111;">...</span>
<div style="left:325.0px;top:264.9px;width:30.0px;height:29.9px;background:#bfd5c9;"></div>
<div style="left:325.5px;top:265.4px;width:29.1px;height:29.0px;background:#36dea6;"></div>
<span style="left:334.3px;top:272.4px;font-size:12.72px;line-height:15.26px;letter-spacing:0.280px;color:#111;">...</span>
<div style="left:355.0px;top:264.9px;width:30.0px;height:29.9px;background:#bfd5c9;"></div>
<div style="left:355.5px;top:265.4px;width:29.1px;height:29.0px;background:#36dea6;"></div>
<span style="left:364.3px;top:272.4px;font-size:12.72px;line-height:15.26px;letter-spacing:0.280px;color:#111;">...</span>
<div style="left:385.0px;top:264.9px;width:30.0px;height:29.9px;background:#bfd5c9;"></div>
<div style="left:385.5px;top:265.4px;width:29.1px;height:29.0px;background:#37df69;"></div>
<span style="left:394.3px;top:272.4px;font-size:12.72px;line-height:15.26px;letter-spacing:0.280px;color:#111;">...</span>
<div style="left:415.0px;top:264.9px;width:30.0px;height:29.9px;background:#bfd5c9;"></div>
<div style="left:415.5px;top:265.4px;width:29.1px;height:29.0px;background:#43e037;"></div>
<span style="left:424.3px;top:272.4px;font-size:12.72px;line-height:15.26px;letter-spacing:0.280px;color:#111;">...</span>
</div>
<svg style="left:1238.5px;top:681.6px" width="10" height="8"><path d="M.8 6.500h8.400L5 1.500z" fill="#3c3c3c"/></svg>
<div style="left:1240.0px;top:694.0px;width:6.0px;height:98.0px;background:#b9b9b9;"></div>
<svg style="left:1238.5px;top:952.0px" width="10" height="8"><path d="M.8 1.500h8.400L5 6.500z" fill="#3c3c3c"/></svg>
<svg style="left:805.0px;top:965.6px" width="8" height="12"><path d="M6 1.400v9.200L1 6z" fill="#3c3c3c"/></svg>
<div style="left:817.2px;top:969.0px;width:254.0px;height:6.0px;background:#b9b9b9;"></div>
<svg style="left:1225.5px;top:965.6px" width="8" height="12"><path d="M1.500 1.400v9.200L6.500 6z" fill="#3c3c3c"/></svg>
<div style="left:1236.6px;top:965.2px;width:14.4px;height:14.3px;background:#fff;box-sizing:border-box;border:1px solid #e2e2e2;"></div>
<div style="left:1304.4px;top:676.8px;width:28.9px;height:30.6px;background:#000;"></div>
<div style="left:1305.9px;top:678.2px;width:27.1px;height:29.0px;background:#e74c3c;"></div>
<div style="left:1251.8px;top:706.1px;width:52.6px;height:1.6px;background:#141414;"></div>
<span style="left:1270.1px;top:687.1px;font-size:15.70px;line-height:18.84px;letter-spacing:0.529px;color:#111;">2.16</span>
<div style="left:1304.4px;top:707.0px;width:28.9px;height:30.6px;background:#000;"></div>
<div style="left:1305.9px;top:708.4px;width:27.1px;height:29.0px;background:#e68a3b;"></div>
<div style="left:1251.8px;top:736.4px;width:52.6px;height:1.6px;background:#141414;"></div>
<span style="left:1270.1px;top:717.3px;font-size:15.70px;line-height:18.84px;letter-spacing:0.529px;color:#111;">1.92</span>
<div style="left:1304.4px;top:737.3px;width:28.9px;height:30.6px;background:#000;"></div>
<div style="left:1305.9px;top:738.7px;width:27.1px;height:29.0px;background:#e4c73a;"></div>
<div style="left:1251.8px;top:766.6px;width:52.6px;height:1.6px;background:#141414;"></div>
<span style="left:1270.1px;top:747.6px;font-size:15.70px;line-height:18.84px;letter-spacing:0.529px;color:#111;">1.68</span>
<div style="left:1304.4px;top:767.5px;width:28.9px;height:30.6px;background:#000;"></div>
<div style="left:1305.9px;top:768.9px;width:27.1px;height:29.0px;background:#c2e339;"></div>
<div style="left:1251.8px;top:796.9px;width:52.6px;height:1.6px;background:#141414;"></div>
<span style="left:1270.1px;top:777.8px;font-size:15.70px;line-height:18.84px;letter-spacing:0.529px;color:#111;">1.44</span>
<div style="left:1304.4px;top:797.8px;width:28.9px;height:30.6px;background:#000;"></div>
<div style="left:1305.9px;top:799.2px;width:27.1px;height:29.0px;background:#82e238;"></div>
<div style="left:1251.8px;top:827.1px;width:52.6px;height:1.6px;background:#141414;"></div>
<span style="left:1279.5px;top:808.1px;font-size:15.70px;line-height:18.84px;letter-spacing:0.504px;color:#111;">1.2</span>
<div style="left:1304.4px;top:828.0px;width:28.9px;height:30.6px;background:#000;"></div>
<div style="left:1305.9px;top:829.4px;width:27.1px;height:29.0px;background:#43e037;"></div>
<div style="left:1251.8px;top:857.4px;width:52.6px;height:1.6px;background:#141414;"></div>
<span style="left:1251.1px;top:838.3px;font-size:15.70px;line-height:18.84px;letter-spacing:0.464px;color:#111;">960e-3</span>
<div style="left:1304.4px;top:858.3px;width:28.9px;height:30.6px;background:#000;"></div>
<div style="left:1305.9px;top:859.7px;width:27.1px;height:29.0px;background:#37df69;"></div>
<div style="left:1251.8px;top:887.6px;width:52.6px;height:1.6px;background:#141414;"></div>
<span style="left:1251.1px;top:868.6px;font-size:15.70px;line-height:18.84px;letter-spacing:0.464px;color:#111;">720e-3</span>
<div style="left:1304.4px;top:888.5px;width:28.9px;height:30.6px;background:#000;"></div>
<div style="left:1305.9px;top:889.9px;width:27.1px;height:29.0px;background:#36dea6;"></div>
<div style="left:1251.8px;top:917.9px;width:52.6px;height:1.6px;background:#141414;"></div>
<span style="left:1251.1px;top:898.8px;font-size:15.70px;line-height:18.84px;letter-spacing:0.464px;color:#111;">480e-3</span>
<div style="left:1304.4px;top:918.8px;width:28.9px;height:30.6px;background:#000;"></div>
<div style="left:1305.9px;top:920.2px;width:27.1px;height:29.0px;background:#35d7dc;"></div>
<div style="left:1251.8px;top:948.1px;width:52.6px;height:1.6px;background:#141414;"></div>
<span style="left:1251.1px;top:929.1px;font-size:15.70px;line-height:18.84px;letter-spacing:0.464px;color:#111;">240e-3</span>
<div style="left:1304.4px;top:949.0px;width:28.9px;height:30.6px;background:#000;"></div>
<div style="left:1305.9px;top:950.4px;width:27.1px;height:29.0px;background:#3498db;"></div>
<div style="left:1251.8px;top:978.4px;width:52.6px;height:1.6px;background:#141414;"></div>
<span style="left:1293.5px;top:959.3px;font-size:15.70px;line-height:18.84px;letter-spacing:0.605px;color:#111;">0</span>
<svg style="left:1342px;top:637px" width="19" height="18"><rect x="1" y=".2" width="16.300" height="16.800" fill="#0404f8"/><path d="M6.200 .2h5.900l5.200 5v6.400l-5.200 5.400H6.200L1 11.600V5.200z" fill="#fff"/><path d="M3.200 2.600L15.100 14.600M15.100 2.600L3.200 14.600" stroke="#5252ff" stroke-width="1.100"/></svg>
<span style="left:1462.7px;top:637.8px;font-size:12.72px;line-height:15.26px;letter-spacing:0.338px;color:#1c1c1c;">Total Time [s] (Collective Operation by Process)</span>
<div style="left:1337.0px;top:661.0px;width:432.0px;height:318.5px;background:#fff;"></div>
<div style="left:1338.400px;top:662.500px;width:91px;height:23.500px;background:linear-gradient(#fff,#e6e6e6)"></div>
<div style="left:1337px;top:661px;width:431.800px;height:304px;overflow:hidden">
<div style="left:94.3px;top:1.8px;width:87.5px;height:22.6px;background:#bdc3c7;"></div>
<span style="left:130.6px;top:6.2px;font-size:12.72px;line-height:15.26px;letter-spacing:-0.344px;color:#111;">P0</span>
<div style="left:184.0px;top:1.8px;width:87.5px;height:22.6px;background:#bdc3c7;"></div>
<span style="left:220.2px;top:6.2px;font-size:12.72px;line-height:15.26px;letter-spacing:-0.344px;color:#111;">P1</span>
<div style="left:273.6px;top:1.8px;width:87.5px;height:22.6px;background:#bdc3c7;"></div>
<span style="left:309.9px;top:6.2px;font-size:12.72px;line-height:15.26px;letter-spacing:-0.344px;color:#111;">P2</span>
<div style="left:363.2px;top:1.8px;width:87.5px;height:22.6px;background:#bdc3c7;"></div>
<span style="left:399.5px;top:6.2px;font-size:12.72px;line-height:15.26px;letter-spacing:-0.344px;color:#111;">P3</span>
<div style="left:1.8px;top:26.4px;width:90.4px;height:22.9px;background:#bdc3c7;"></div>
<span style="left:4.3px;top:30.0px;font-size:12.72px;line-height:15.26px;letter-spacing:0.016px;color:#111;">MPI_Barrier</span>
<div style="left:93.4px;top:25.5px;width:89.7px;height:25.1px;background:#e8d0c8;"></div>
<div style="left:94.0px;top:26.1px;width:88.6px;height:24.0px;background:#c2e339;"></div>
<span style="left:103.5px;top:30.0px;font-size:12.72px;line-height:15.26px;letter-spacing:0.461px;color:#111;">606.477e-3</span>
<div style="left:183.0px;top:25.5px;width:89.7px;height:25.1px;background:#e8d0c8;"></div>
<div style="left:183.6px;top:26.1px;width:88.6px;height:24.0px;background:#e74c3c;"></div>
<span style="left:193.2px;top:30.0px;font-size:12.72px;line-height:15.26px;letter-spacing:0.650px;color:#fff;">859.111e-3</span>
<div style="left:272.7px;top:25.5px;width:89.7px;height:25.1px;background:#e8d0c8;"></div>
<div style="left:273.3px;top:26.1px;width:88.6px;height:24.0px;background:#e74c3c;"></div>
<span style="left:286.6px;top:30.0px;font-size:12.72px;line-height:15.26px;letter-spacing:0.450px;color:#fff;">860.83e-3</span>
<div style="left:362.3px;top:25.5px;width:89.7px;height:25.1px;background:#e8d0c8;"></div>
<div style="left:362.9px;top:26.1px;width:88.6px;height:24.0px;background:#e74c3c;"></div>
<span style="left:372.5px;top:30.0px;font-size:12.72px;line-height:15.26px;letter-spacing:0.461px;color:#fff;">859.063e-3</span>
<div style="left:1.8px;top:51.5px;width:90.4px;height:22.9px;background:#bdc3c7;"></div>
<span style="left:4.3px;top:55.0px;font-size:12.72px;line-height:15.26px;letter-spacing:-0.137px;color:#111;">MPI_Bcast</span>
<div style="left:93.4px;top:50.6px;width:89.7px;height:25.1px;background:#c4d4e2;"></div>
<div style="left:94.0px;top:51.2px;width:88.6px;height:24.0px;background:#3498db;"></div>
<span style="left:116.9px;top:55.0px;font-size:12.72px;line-height:15.26px;letter-spacing:0.442px;color:#111;">102e-6</span>
<div style="left:183.0px;top:50.6px;width:89.7px;height:25.1px;background:#c4d4e2;"></div>
<div style="left:183.6px;top:51.2px;width:88.6px;height:24.0px;background:#3498db;"></div>
<span style="left:206.5px;top:55.0px;font-size:12.72px;line-height:15.26px;letter-spacing:0.442px;color:#111;">570e-6</span>
<div style="left:272.7px;top:50.6px;width:89.7px;height:25.1px;background:#c4d4e2;"></div>
<div style="left:273.3px;top:51.2px;width:88.6px;height:24.0px;background:#3498db;"></div>
<span style="left:296.2px;top:55.0px;font-size:12.72px;line-height:15.26px;letter-spacing:0.442px;color:#111;">570e-6</span>
<div style="left:362.3px;top:50.6px;width:89.7px;height:25.1px;background:#c4d4e2;"></div>
<div style="left:362.9px;top:51.2px;width:88.6px;height:24.0px;background:#3498db;"></div>
<span style="left:385.8px;top:55.0px;font-size:12.72px;line-height:15.26px;letter-spacing:0.442px;color:#111;">725e-6</span>
<div style="left:1.8px;top:76.5px;width:90.4px;height:22.9px;background:#bdc3c7;"></div>
<span style="left:4.3px;top:80.1px;font-size:12.72px;line-height:15.26px;letter-spacing:-0.016px;color:#111;">MPI_Gather</span>
<div style="left:93.4px;top:75.6px;width:89.7px;height:25.1px;background:#c4d4e2;"></div>
<div style="left:94.0px;top:76.2px;width:88.6px;height:24.0px;background:#3498db;"></div>
<span style="left:111.1px;top:80.1px;font-size:12.72px;line-height:15.26px;letter-spacing:0.436px;color:#111;">1.015e-3</span>
<div style="left:183.0px;top:75.6px;width:89.7px;height:25.1px;background:#c4d4e2;"></div>
<div style="left:183.6px;top:76.2px;width:88.6px;height:24.0px;background:#3498db;"></div>
<span style="left:214.2px;top:80.1px;font-size:12.72px;line-height:15.26px;letter-spacing:0.382px;color:#111;">5e-6</span>
<div style="left:272.7px;top:75.6px;width:89.7px;height:25.1px;background:#c4d4e2;"></div>
<div style="left:273.3px;top:76.2px;width:88.6px;height:24.0px;background:#3498db;"></div>
<span style="left:303.8px;top:80.1px;font-size:12.72px;line-height:15.26px;letter-spacing:0.382px;color:#111;">4e-6</span>
<div style="left:362.3px;top:75.6px;width:89.7px;height:25.1px;background:#c4d4e2;"></div>
<div style="left:362.9px;top:76.2px;width:88.6px;height:24.0px;background:#3498db;"></div>
<span style="left:393.5px;top:80.1px;font-size:12.72px;line-height:15.26px;letter-spacing:0.382px;color:#111;">5e-6</span>
<div style="left:1.8px;top:101.6px;width:90.4px;height:22.9px;background:#bdc3c7;"></div>
<span style="left:4.3px;top:105.2px;font-size:12.72px;line-height:15.26px;letter-spacing:0.099px;color:#111;">MPI_Scatterv</span>
<div style="left:93.4px;top:100.7px;width:89.7px;height:25.1px;background:#c4d4e2;"></div>
<div style="left:94.0px;top:101.3px;width:88.6px;height:24.0px;background:#3498db;"></div>
<span style="left:111.1px;top:105.2px;font-size:12.72px;line-height:15.26px;letter-spacing:0.436px;color:#111;">3.015e-3</span>
<div style="left:183.0px;top:100.7px;width:89.7px;height:25.1px;background:#c4d4e2;"></div>
<div style="left:183.6px;top:101.3px;width:88.6px;height:24.0px;background:#3498db;"></div>
<span style="left:200.8px;top:105.2px;font-size:12.72px;line-height:15.26px;letter-spacing:0.436px;color:#111;">2.928e-3</span>
<div style="left:272.7px;top:100.7px;width:89.7px;height:25.1px;background:#c4d4e2;"></div>
<div style="left:273.3px;top:101.3px;width:88.6px;height:24.0px;background:#3498db;"></div>
<span style="left:290.4px;top:105.2px;font-size:12.72px;line-height:15.26px;letter-spacing:0.436px;color:#111;">3.006e-3</span>
<div style="left:362.3px;top:100.7px;width:89.7px;height:25.1px;background:#c4d4e2;"></div>
<div style="left:362.9px;top:101.3px;width:88.6px;height:24.0px;background:#3498db;"></div>
<span style="left:380.1px;top:105.2px;font-size:12.72px;line-height:15.26px;letter-spacing:0.436px;color:#111;">2.947e-3</span>
<div style="left:1.8px;top:126.7px;width:90.4px;height:22.9px;background:#bdc3c7;"></div>
<span style="left:4.3px;top:130.2px;font-size:12.72px;line-height:15.26px;letter-spacing:0.132px;color:#111;">MPI_Allgather</span>
<div style="left:93.4px;top:125.8px;width:89.7px;height:25.1px;background:#c4d4e2;"></div>
<div style="left:94.0px;top:126.4px;width:88.6px;height:24.0px;background:#3498db;"></div>
<span style="left:116.9px;top:130.2px;font-size:12.72px;line-height:15.26px;letter-spacing:0.442px;color:#111;">645e-6</span>
<div style="left:183.0px;top:125.8px;width:89.7px;height:25.1px;background:#c4d4e2;"></div>
<div style="left:183.6px;top:126.4px;width:88.6px;height:24.0px;background:#3498db;"></div>
<span style="left:206.5px;top:130.2px;font-size:12.72px;line-height:15.26px;letter-spacing:0.442px;color:#111;">650e-6</span>
<div style="left:272.7px;top:125.8px;width:89.7px;height:25.1px;background:#c4d4e2;"></div>
<div style="left:273.3px;top:126.4px;width:88.6px;height:24.0px;background:#3498db;"></div>
<span style="left:296.2px;top:130.2px;font-size:12.72px;line-height:15.26px;letter-spacing:0.442px;color:#111;">651e-6</span>
<div style="left:362.3px;top:125.8px;width:89.7px;height:25.1px;background:#c4d4e2;"></div>
<div style="left:362.9px;top:126.4px;width:88.6px;height:24.0px;background:#3498db;"></div>
<span style="left:385.8px;top:130.2px;font-size:12.72px;line-height:15.26px;letter-spacing:0.442px;color:#111;">651e-6</span>
<div style="left:1.8px;top:151.8px;width:90.4px;height:22.9px;background:#bdc3c7;"></div>
<span style="left:4.3px;top:155.3px;font-size:12.72px;line-height:15.26px;letter-spacing:0.076px;color:#111;">MPI_Alltoall</span>
<div style="left:93.4px;top:150.8px;width:89.7px;height:25.1px;background:#c4d4e2;"></div>
<div style="left:94.0px;top:151.4px;width:88.6px;height:24.0px;background:#3498db;"></div>
<span style="left:116.9px;top:155.3px;font-size:12.72px;line-height:15.26px;letter-spacing:0.442px;color:#111;">644e-6</span>
<div style="left:183.0px;top:150.8px;width:89.7px;height:25.1px;background:#c4d4e2;"></div>
<div style="left:183.6px;top:151.4px;width:88.6px;height:24.0px;background:#3498db;"></div>
<span style="left:206.5px;top:155.3px;font-size:12.72px;line-height:15.26px;letter-spacing:0.442px;color:#111;">643e-6</span>
<div style="left:272.7px;top:150.8px;width:89.7px;height:25.1px;background:#c4d4e2;"></div>
<div style="left:273.3px;top:151.4px;width:88.6px;height:24.0px;background:#3498db;"></div>
<span style="left:296.2px;top:155.3px;font-size:12.72px;line-height:15.26px;letter-spacing:0.442px;color:#111;">644e-6</span>
<div style="left:362.3px;top:150.8px;width:89.7px;height:25.1px;background:#c4d4e2;"></div>
<div style="left:362.9px;top:151.4px;width:88.6px;height:24.0px;background:#3498db;"></div>
<span style="left:385.8px;top:155.3px;font-size:12.72px;line-height:15.26px;letter-spacing:0.442px;color:#111;">643e-6</span>
<div style="left:1.8px;top:176.8px;width:90.4px;height:22.9px;background:#bdc3c7;"></div>
<span style="left:4.3px;top:180.4px;font-size:12.72px;line-height:15.26px;letter-spacing:0.253px;color:#111;">Sum</span>
<div style="left:93.4px;top:175.9px;width:89.7px;height:25.1px;background:#dedede;"></div>
<div style="left:94.2px;top:176.7px;width:88.2px;height:23.7px;background:#fff;"></div>
<span style="left:103.5px;top:180.4px;font-size:12.72px;line-height:15.26px;letter-spacing:0.556px;color:#111;">611.898e-3</span>
<div style="left:183.0px;top:175.9px;width:89.7px;height:25.1px;background:#dedede;"></div>
<div style="left:183.8px;top:176.7px;width:88.2px;height:23.7px;background:#fff;"></div>
<span style="left:193.2px;top:180.4px;font-size:12.72px;line-height:15.26px;letter-spacing:0.461px;color:#111;">863.907e-3</span>
<div style="left:272.7px;top:175.9px;width:89.7px;height:25.1px;background:#dedede;"></div>
<div style="left:273.5px;top:176.7px;width:88.2px;height:23.7px;background:#fff;"></div>
<span style="left:282.8px;top:180.4px;font-size:12.72px;line-height:15.26px;letter-spacing:0.461px;color:#111;">865.705e-3</span>
<div style="left:362.3px;top:175.9px;width:89.7px;height:25.1px;background:#dedede;"></div>
<div style="left:363.1px;top:176.7px;width:88.2px;height:23.7px;background:#fff;"></div>
<span style="left:372.5px;top:180.4px;font-size:12.72px;line-height:15.26px;letter-spacing:0.461px;color:#111;">864.034e-3</span>
<div style="left:1.8px;top:201.9px;width:90.4px;height:22.9px;background:#bdc3c7;"></div>
<span style="left:4.3px;top:205.5px;font-size:12.72px;line-height:15.26px;letter-spacing:0.220px;color:#111;">Mean</span>
<div style="left:93.4px;top:201.0px;width:89.7px;height:25.1px;background:#dedede;"></div>
<div style="left:94.2px;top:201.8px;width:88.2px;height:23.7px;background:#fff;"></div>
<span style="left:103.5px;top:205.5px;font-size:12.72px;line-height:15.26px;letter-spacing:0.461px;color:#111;">101.983e-3</span>
<div style="left:183.0px;top:201.0px;width:89.7px;height:25.1px;background:#dedede;"></div>
<div style="left:183.8px;top:201.8px;width:88.2px;height:23.7px;background:#fff;"></div>
<span style="left:193.2px;top:205.5px;font-size:12.72px;line-height:15.26px;letter-spacing:0.461px;color:#111;">143.984e-3</span>
<div style="left:272.7px;top:201.0px;width:89.7px;height:25.1px;background:#dedede;"></div>
<div style="left:273.5px;top:201.8px;width:88.2px;height:23.7px;background:#fff;"></div>
<span style="left:282.8px;top:205.5px;font-size:12.72px;line-height:15.26px;letter-spacing:0.461px;color:#111;">144.284e-3</span>
<div style="left:362.3px;top:201.0px;width:89.7px;height:25.1px;background:#dedede;"></div>
<div style="left:363.1px;top:201.8px;width:88.2px;height:23.7px;background:#fff;"></div>
<span style="left:372.5px;top:205.5px;font-size:12.72px;line-height:15.26px;letter-spacing:0.461px;color:#111;">144.006e-3</span>
<div style="left:1.8px;top:227.0px;width:90.4px;height:22.9px;background:#bdc3c7;"></div>
<span style="left:4.3px;top:230.5px;font-size:12.72px;line-height:15.26px;letter-spacing:0.326px;color:#111;">StdDev</span>
<div style="left:93.4px;top:226.1px;width:89.7px;height:25.1px;background:#dedede;"></div>
<div style="left:94.2px;top:226.9px;width:88.2px;height:23.7px;background:#fff;"></div>
<span style="left:103.5px;top:230.5px;font-size:12.72px;line-height:15.26px;letter-spacing:0.461px;color:#111;">225.618e-3</span>
<div style="left:183.0px;top:226.1px;width:89.7px;height:25.1px;background:#dedede;"></div>
<div style="left:183.8px;top:226.9px;width:88.2px;height:23.7px;background:#fff;"></div>
<span style="left:193.2px;top:230.5px;font-size:12.72px;line-height:15.26px;letter-spacing:0.461px;color:#111;">319.816e-3</span>
<div style="left:272.7px;top:226.1px;width:89.7px;height:25.1px;background:#dedede;"></div>
<div style="left:273.5px;top:226.9px;width:88.2px;height:23.7px;background:#fff;"></div>
<span style="left:286.6px;top:230.5px;font-size:12.72px;line-height:15.26px;letter-spacing:0.450px;color:#111;">320.45e-3</span>
<div style="left:362.3px;top:226.1px;width:89.7px;height:25.1px;background:#dedede;"></div>
<div style="left:363.1px;top:226.9px;width:88.2px;height:23.7px;background:#fff;"></div>
<span style="left:372.5px;top:230.5px;font-size:12.72px;line-height:15.26px;letter-spacing:0.461px;color:#111;">319.785e-3</span>
<div style="left:1.8px;top:250.8px;width:91.2px;height:53.0px;background:#efefef;"></div>
</div>
<svg style="left:1343.0px;top:965.6px" width="8" height="12"><path d="M6 1.400v9.200L1 6z" fill="#3c3c3c"/></svg>
<div style="left:1354.0px;top:969.0px;width:62.0px;height:6.0px;background:#b9b9b9;"></div>
<svg style="left:1756.5px;top:965.6px" width="8" height="12"><path d="M1.500 1.400v9.200L6.500 6z" fill="#3c3c3c"/></svg>
<div style="left:1769.7px;top:660.8px;width:29.3px;height:32.1px;background:#000;"></div>
<div style="left:1771.2px;top:662.2px;width:27.5px;height:30.5px;background:#e74c3c;"></div>
<div style="left:1799.0px;top:691.7px;width:52.0px;height:1.6px;background:#141414;"></div>
<span style="left:1798.1px;top:672.6px;font-size:15.70px;line-height:18.84px;letter-spacing:0.464px;color:#111;">810e-3</span>
<div style="left:1769.7px;top:692.6px;width:29.3px;height:32.1px;background:#000;"></div>
<div style="left:1771.2px;top:694.0px;width:27.5px;height:30.5px;background:#e68a3b;"></div>
<div style="left:1799.0px;top:723.5px;width:52.0px;height:1.6px;background:#141414;"></div>
<span style="left:1798.1px;top:704.4px;font-size:15.70px;line-height:18.84px;letter-spacing:0.464px;color:#111;">720e-3</span>
<div style="left:1769.7px;top:724.4px;width:29.3px;height:32.1px;background:#000;"></div>
<div style="left:1771.2px;top:725.8px;width:27.5px;height:30.5px;background:#e4c73a;"></div>
<div style="left:1799.0px;top:755.3px;width:52.0px;height:1.6px;background:#141414;"></div>
<span style="left:1798.1px;top:736.2px;font-size:15.70px;line-height:18.84px;letter-spacing:0.464px;color:#111;">630e-3</span>
<div style="left:1769.7px;top:756.2px;width:29.3px;height:32.1px;background:#000;"></div>
<div style="left:1771.2px;top:757.6px;width:27.5px;height:30.5px;background:#c2e339;"></div>
<div style="left:1799.0px;top:787.1px;width:52.0px;height:1.6px;background:#141414;"></div>
<span style="left:1798.1px;top:768.0px;font-size:15.70px;line-height:18.84px;letter-spacing:0.464px;color:#111;">540e-3</span>
<div style="left:1769.7px;top:788.0px;width:29.3px;height:32.1px;background:#000;"></div>
<div style="left:1771.2px;top:789.4px;width:27.5px;height:30.5px;background:#82e238;"></div>
<div style="left:1799.0px;top:818.9px;width:52.0px;height:1.6px;background:#141414;"></div>
<span style="left:1798.1px;top:799.8px;font-size:15.70px;line-height:18.84px;letter-spacing:0.464px;color:#111;">450e-3</span>
<div style="left:1769.7px;top:819.8px;width:29.3px;height:32.1px;background:#000;"></div>
<div style="left:1771.2px;top:821.2px;width:27.5px;height:30.5px;background:#43e037;"></div>
<div style="left:1799.0px;top:850.7px;width:52.0px;height:1.6px;background:#141414;"></div>
<span style="left:1798.1px;top:831.6px;font-size:15.70px;line-height:18.84px;letter-spacing:0.464px;color:#111;">360e-3</span>
<div style="left:1769.7px;top:851.6px;width:29.3px;height:32.1px;background:#000;"></div>
<div style="left:1771.2px;top:853.0px;width:27.5px;height:30.5px;background:#37df69;"></div>
<div style="left:1799.0px;top:882.5px;width:52.0px;height:1.6px;background:#141414;"></div>
<span style="left:1798.1px;top:863.4px;font-size:15.70px;line-height:18.84px;letter-spacing:0.464px;color:#111;">270e-3</span>
<div style="left:1769.7px;top:883.4px;width:29.3px;height:32.1px;background:#000;"></div>
<div style="left:1771.2px;top:884.8px;width:27.5px;height:30.5px;background:#36dea6;"></div>
<div style="left:1799.0px;top:914.3px;width:52.0px;height:1.6px;background:#141414;"></div>
<span style="left:1798.1px;top:895.2px;font-size:15.70px;line-height:18.84px;letter-spacing:0.464px;color:#111;">180e-3</span>
<div style="left:1769.7px;top:915.2px;width:29.3px;height:32.1px;background:#000;"></div>
<div style="left:1771.2px;top:916.6px;width:27.5px;height:30.5px;background:#35d7dc;"></div>
<div style="left:1799.0px;top:946.1px;width:52.0px;height:1.6px;background:#141414;"></div>
<span style="left:1807.5px;top:927.0px;font-size:15.70px;line-height:18.84px;letter-spacing:0.436px;color:#111;">90e-3</span>
<div style="left:1769.7px;top:947.0px;width:29.3px;height:32.1px;background:#000;"></div>
<div style="left:1771.2px;top:948.4px;width:27.5px;height:30.5px;background:#3498db;"></div>
<div style="left:1799.0px;top:977.9px;width:52.0px;height:1.6px;background:#141414;"></div>
<span style="left:1840.5px;top:958.8px;font-size:15.70px;line-height:18.84px;letter-spacing:0.605px;color:#111;">0</span>
</div></body></html>
